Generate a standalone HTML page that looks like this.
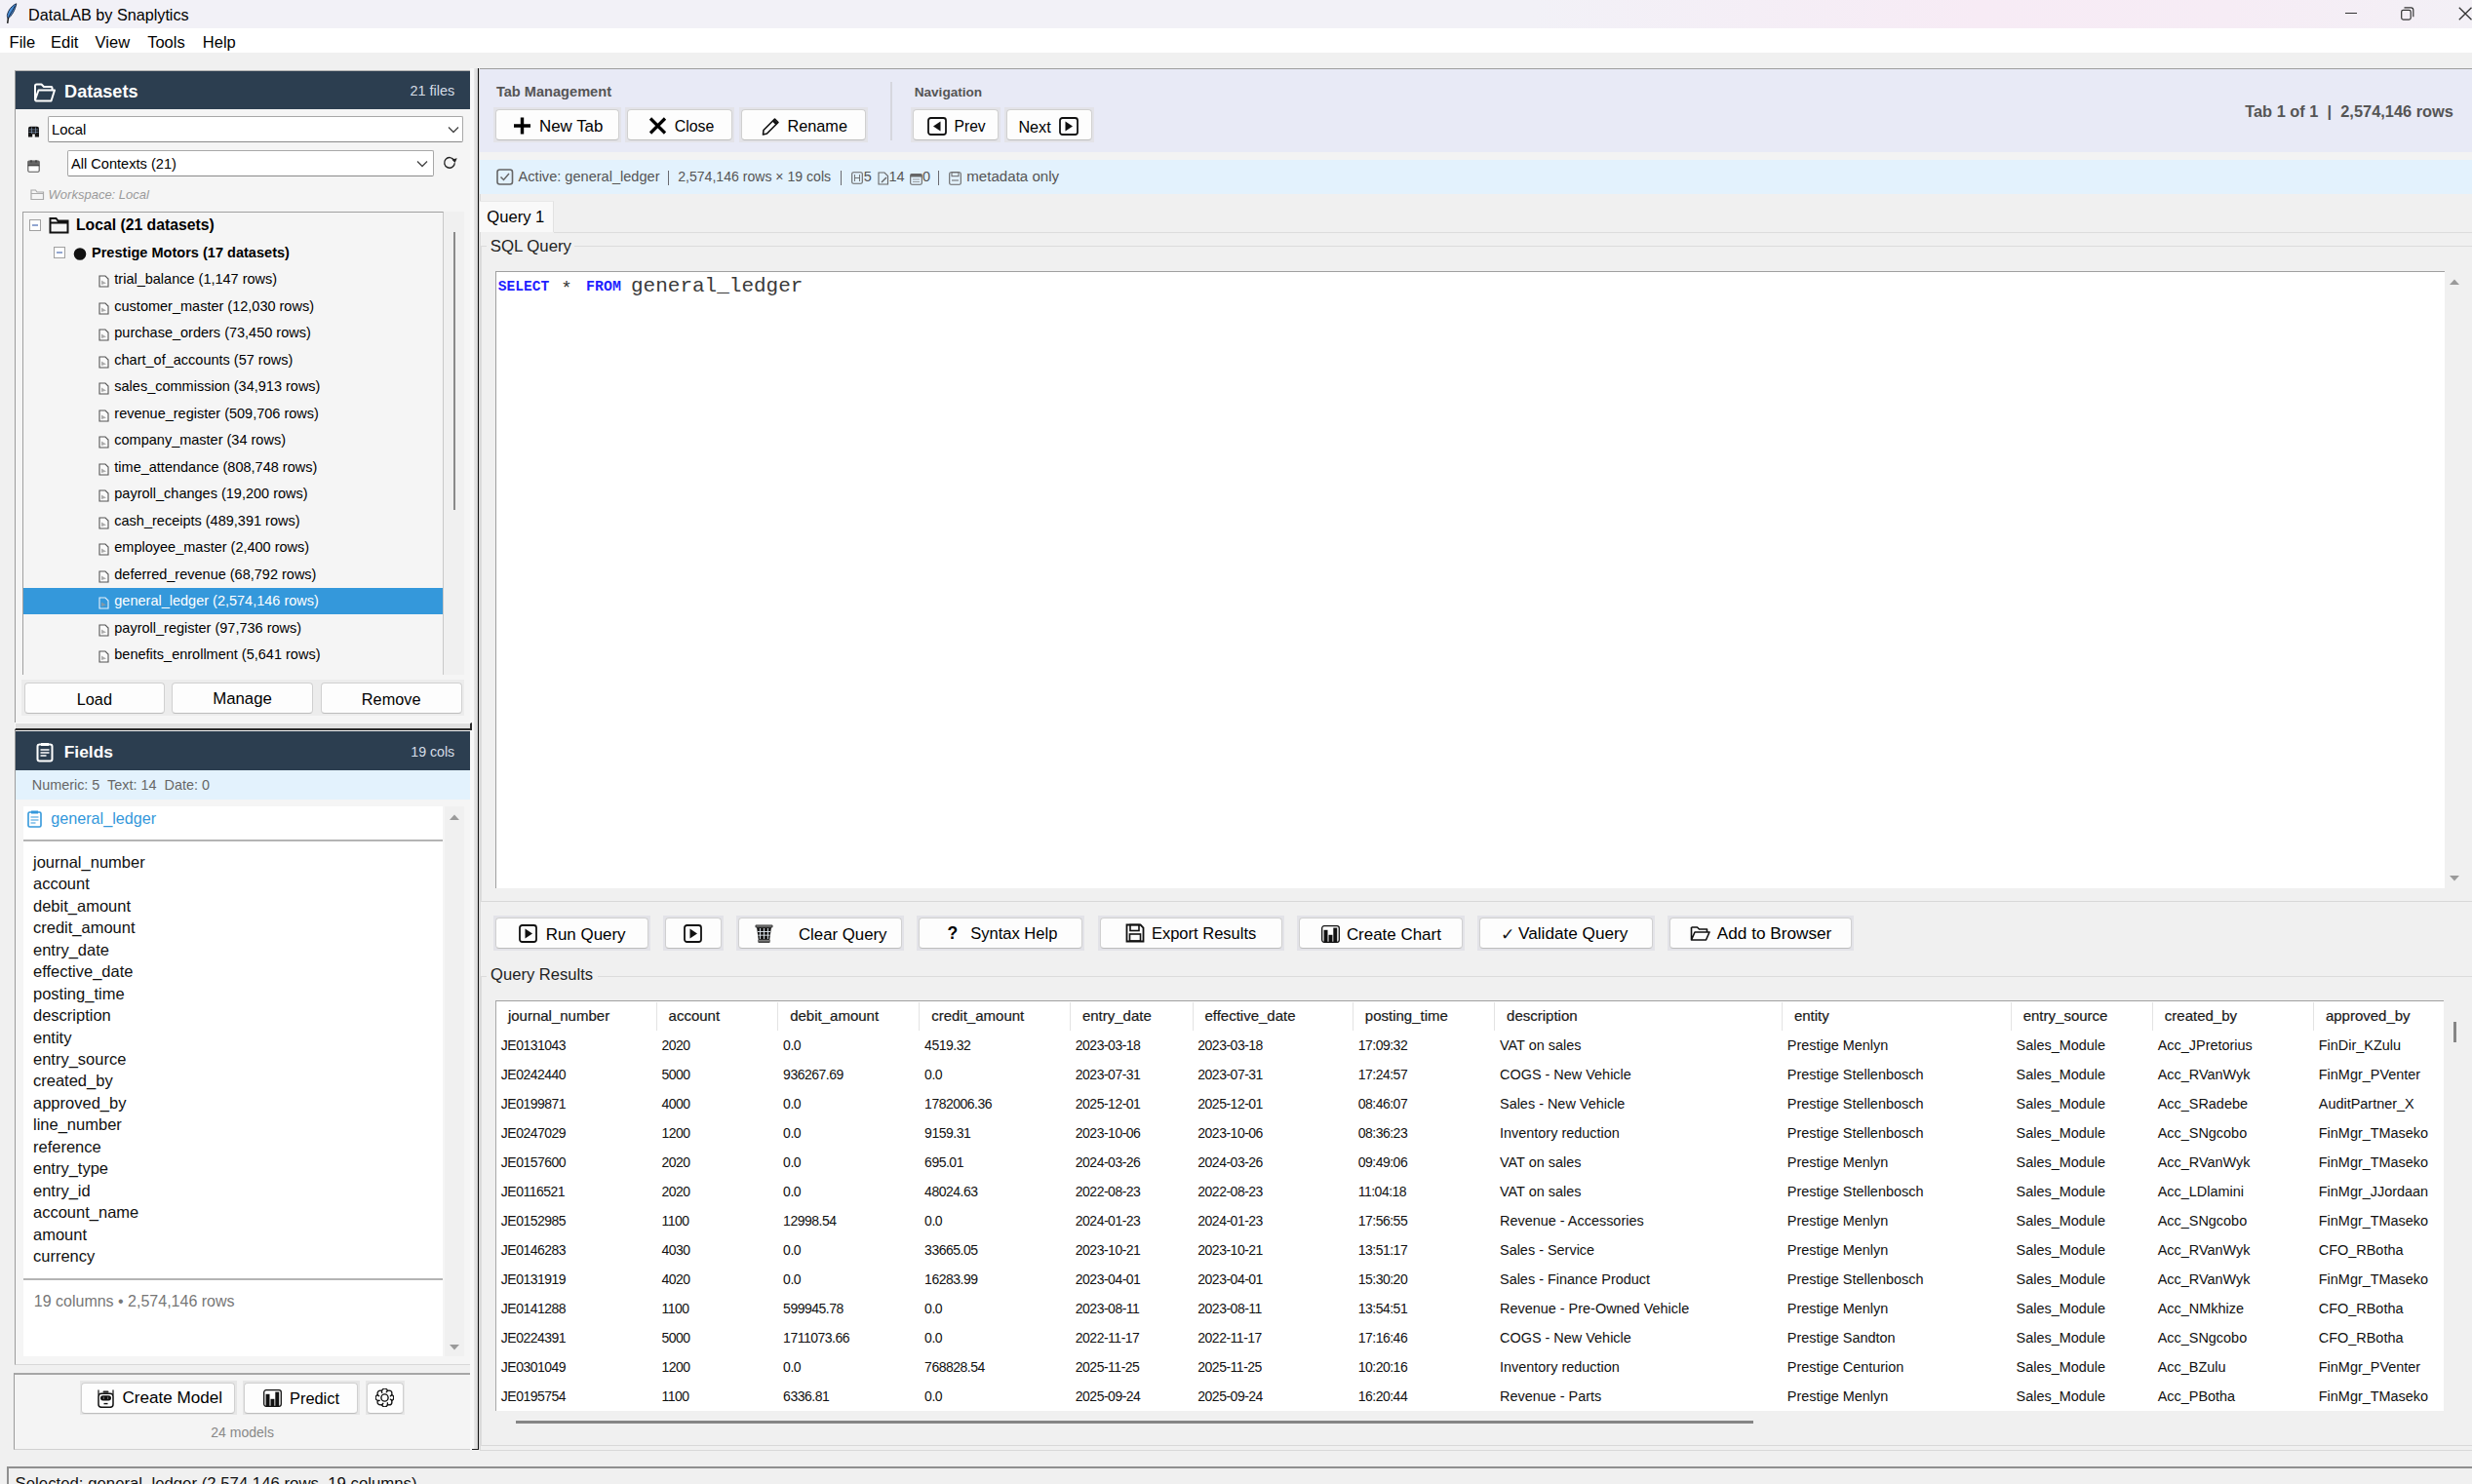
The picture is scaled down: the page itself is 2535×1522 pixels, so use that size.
<!DOCTYPE html>
<html><head><meta charset="utf-8"><title>DataLAB by Snaplytics</title>
<style>
html,body{margin:0;padding:0;}
body{width:2535px;height:1522px;overflow:hidden;position:relative;background:#f0f0f0;font-family:"Liberation Sans",sans-serif;}
body div, body svg{position:absolute;}
</style></head><body>
<div style="left:0px;top:0px;width:2535px;height:29px;background:linear-gradient(90deg,#f2f1f7 0%,#f2f1f7 62%,#f7ebf5 80%,#f6ecf5 90%,#f3f0f6 100%);"></div>
<div style="left:29px;top:5.17px;font-size:16.2px;line-height:20.25px;color:#000;font-weight:normal;font-family:'Liberation Sans', sans-serif;white-space:nowrap;">DataLAB by Snaplytics</div>
<svg style="left:6px;top:3px" width="12" height="21" viewBox="0 0 12 21"><path d="M10.8 0.8 C6.5 2.5 2.5 7 1.4 12.5 C1.2 14 1.6 15.3 2.4 16 C6 13 9.5 7.5 10.8 0.8 Z" fill="#4a90d9" stroke="#1b2a44" stroke-width="1"/><path d="M9.5 3 L2.8 14.5" stroke="#10203a" stroke-width="0.9"/><path d="M2.4 15.5 L1.8 20.3" stroke="#1b1b1b" stroke-width="1.5" stroke-linecap="round"/></svg>
<div style="left:2405px;top:13px;width:12px;height:1.2px;background:#333;"></div>
<svg style="left:2462px;top:7px" width="14" height="14" viewBox="0 0 14 14"><rect x="0.7" y="3.3" width="9.5" height="9.8" rx="1.8" fill="none" stroke="#333" stroke-width="1.2"/><path d="M3.5 0.9 h7 a2.3 2.3 0 0 1 2.3 2.3 v7" fill="none" stroke="#333" stroke-width="1.2"/></svg>
<svg style="left:2521px;top:7px" width="15" height="14" viewBox="0 0 15 14"><path d="M0.8 0.8 L13.5 13.2 M13.5 0.8 L0.8 13.2" stroke="#333" stroke-width="1.3"/></svg>
<div style="left:0px;top:29px;width:2535px;height:25px;background:#fff;"></div>
<div style="left:9.6px;top:32.99px;font-size:16.5px;line-height:20.62px;color:#000;font-weight:normal;font-family:'Liberation Sans', sans-serif;white-space:nowrap;">File</div>
<div style="left:52px;top:32.99px;font-size:16.5px;line-height:20.62px;color:#000;font-weight:normal;font-family:'Liberation Sans', sans-serif;white-space:nowrap;">Edit</div>
<div style="left:97.6px;top:32.99px;font-size:16.5px;line-height:20.62px;color:#000;font-weight:normal;font-family:'Liberation Sans', sans-serif;white-space:nowrap;">View</div>
<div style="left:151.2px;top:32.99px;font-size:16.5px;line-height:20.62px;color:#000;font-weight:normal;font-family:'Liberation Sans', sans-serif;white-space:nowrap;">Tools</div>
<div style="left:207.8px;top:32.99px;font-size:16.5px;line-height:20.62px;color:#000;font-weight:normal;font-family:'Liberation Sans', sans-serif;white-space:nowrap;">Help</div>
<div style="left:15px;top:71.5px;width:468px;height:670.5px;background:#f5f5f5;border:1px solid #9c9c9c;border-right:none;border-top-color:#b0b0b0;border-bottom-color:#d6d6d6;box-sizing:border-box;"></div>
<div style="left:16px;top:72.5px;width:466px;height:39.7px;background:#2c3e50;"></div>
<svg style="left:34px;top:85px" width="24" height="21" viewBox="0 0 24 21"><path d="M2 17.5 V3 a1.5 1.5 0 0 1 1.5 -1.5 h5 l2.5 2.5 h7.5 a1 1 0 0 1 1 1 v2.5" fill="none" stroke="#fff" stroke-width="2" stroke-linejoin="round"/><path d="M2 17.5 L5.5 7.5 H22 L18.5 18.5 H3 Z" fill="none" stroke="#fff" stroke-width="2" stroke-linejoin="round"/></svg>
<div style="left:66.1px;top:82.72px;font-size:18.1px;line-height:22.62px;color:#fff;font-weight:bold;font-family:'Liberation Sans', sans-serif;white-space:nowrap;">Datasets</div>
<div style="right:2068.8px;top:84.11px;font-size:14.4px;line-height:18.0px;color:#d5dde6;font-weight:normal;font-family:'Liberation Sans', sans-serif;white-space:nowrap;">21 files</div>
<svg style="left:27.5px;top:128.5px" width="13" height="12" viewBox="0 0 13 12"><path d="M1 11.5 V3 Q1 0.8 3 0.8 H10 Q12 0.8 12 3 V11.5 H7.8 V8.5 H5.2 V11.5 Z" fill="#151515"/><path d="M1.5 4 H11.5 M1.5 6.5 H11.5 M4.5 1.5 V8 M8.5 1.5 V8" stroke="#8aa0c0" stroke-width="0.7" opacity="0.9"/></svg>
<div style="left:49px;top:119px;width:426px;height:27px;background:#fff;border:1px solid #a8a8a8;border-bottom-color:#8a8a8a;border-radius:2px;box-sizing:border-box;"></div>
<div style="left:53px;top:124.22px;font-size:14.8px;line-height:18.5px;color:#000;font-weight:normal;font-family:'Liberation Sans', sans-serif;white-space:nowrap;">Local</div>
<svg style="left:459px;top:129px" width="12" height="8" viewBox="0 0 12 8"><path d="M1 1.5 L6 6.5 L11 1.5" fill="none" stroke="#444" stroke-width="1.3"/></svg>
<svg style="left:27.5px;top:163.5px" width="13" height="13" viewBox="0 0 13 13"><rect x="0.8" y="1" width="11.4" height="11.2" rx="1.2" fill="#fff" stroke="#555" stroke-width="1.1"/><rect x="0.8" y="1" width="11.4" height="4.6" fill="#666"/><path d="M0.8 5.8 H12.2" stroke="#222" stroke-width="1"/><path d="M4 0.3 V2.5 M9 0.3 V2.5" stroke="#333" stroke-width="1.2"/></svg>
<div style="left:69px;top:154px;width:376px;height:27px;background:#fff;border:1px solid #a8a8a8;border-bottom-color:#8a8a8a;border-radius:2px;box-sizing:border-box;"></div>
<div style="left:73px;top:158.72px;font-size:14.6px;line-height:18.25px;color:#000;font-weight:normal;font-family:'Liberation Sans', sans-serif;white-space:nowrap;">All Contexts (21)</div>
<svg style="left:427px;top:164px" width="12" height="8" viewBox="0 0 12 8"><path d="M1 1.5 L6 6.5 L11 1.5" fill="none" stroke="#444" stroke-width="1.3"/></svg>
<svg style="left:454px;top:160px" width="16" height="14" viewBox="0 0 16 14"><path d="M11.6 4.2 A5.3 5.3 0 1 0 12.3 7.2" fill="none" stroke="#222" stroke-width="1.4"/><path d="M9.3 3.6 L14.8 2.3 L12.6 7.0 Z" fill="#222"/></svg>
<svg style="left:31px;top:193px" width="15" height="13" viewBox="0 0 15 13"><path d="M1 2 h4.5 l1.5 2 h6.5 v7.5 H1 Z M1 5.5 h13" fill="none" stroke="#aaa" stroke-width="1.2"/></svg>
<div style="left:49.6px;top:191.67px;font-size:13.0px;line-height:16.25px;color:#9a9a9a;font-weight:normal;font-family:'Liberation Sans', sans-serif;white-space:nowrap;font-style:italic;">Workspace: Local</div>
<div style="left:23px;top:217px;width:432px;height:475px;background:#f5f5f5;border:1px solid #a0a0a0;border-right:1px solid #c8c8c8;border-bottom:none;box-sizing:border-box;"></div>
<div style="left:455px;top:217px;width:21px;height:475px;background:#f0f0f0;"></div>
<div style="left:465px;top:238px;width:2px;height:285px;background:#8a8a8a;"></div>
<svg style="left:30px;top:225.4px" width="12" height="12" viewBox="0 0 12 12"><rect x="0.5" y="0.5" width="11" height="11" fill="#fff" stroke="#a0a0a0"/><path d="M3 6 h6" stroke="#4a6cb3" stroke-width="1.2"/></svg>
<svg style="left:50px;top:222.4px" width="21" height="18" viewBox="0 0 21 18"><path d="M1.5 2 h6 l2 2.5 h10 v12 h-18 Z M1.5 6.5 h18" fill="none" stroke="#111" stroke-width="2"/></svg>
<div style="left:77.9px;top:221.1px;font-size:15.77px;line-height:19.71px;color:#000;font-weight:bold;font-family:'Liberation Sans', sans-serif;white-space:nowrap;">Local (21 datasets)</div>
<svg style="left:55px;top:252.9px" width="12" height="12" viewBox="0 0 12 12"><rect x="0.5" y="0.5" width="11" height="11" fill="#fff" stroke="#a0a0a0"/><path d="M3 6 h6" stroke="#4a6cb3" stroke-width="1.2"/></svg>
<svg style="left:75px;top:252.9px" width="14" height="14" viewBox="0 0 14 14"><circle cx="7" cy="7.5" r="6.3" fill="#111"/></svg>
<div style="left:94px;top:249.77px;font-size:14.55px;line-height:18.19px;color:#000;font-weight:bold;font-family:'Liberation Sans', sans-serif;white-space:nowrap;">Prestige Motors (17 datasets)</div>
<svg style="left:101px;top:282.4px" width="11" height="13" viewBox="0 0 11 13"><path d="M1 1 h6 l3 3 v8 h-9 Z" fill="#fafafa" stroke="#555" stroke-width="1.1"/><path d="M3 5.5 L8 8.5 L3 10 Z" fill="#999" opacity="0.8"/></svg>
<div style="left:117.3px;top:277.32px;font-size:14.5px;line-height:18.12px;color:#000;font-weight:normal;font-family:'Liberation Sans', sans-serif;white-space:nowrap;">trial_balance (1,147 rows)</div>
<svg style="left:101px;top:309.9px" width="11" height="13" viewBox="0 0 11 13"><path d="M1 1 h6 l3 3 v8 h-9 Z" fill="#fafafa" stroke="#555" stroke-width="1.1"/><path d="M3 5.5 L8 8.5 L3 10 Z" fill="#999" opacity="0.8"/></svg>
<div style="left:117.3px;top:304.81px;font-size:14.5px;line-height:18.12px;color:#000;font-weight:normal;font-family:'Liberation Sans', sans-serif;white-space:nowrap;">customer_master (12,030 rows)</div>
<svg style="left:101px;top:337.4px" width="11" height="13" viewBox="0 0 11 13"><path d="M1 1 h6 l3 3 v8 h-9 Z" fill="#fafafa" stroke="#555" stroke-width="1.1"/><path d="M3 5.5 L8 8.5 L3 10 Z" fill="#999" opacity="0.8"/></svg>
<div style="left:117.3px;top:332.3px;font-size:14.5px;line-height:18.12px;color:#000;font-weight:normal;font-family:'Liberation Sans', sans-serif;white-space:nowrap;">purchase_orders (73,450 rows)</div>
<svg style="left:101px;top:364.9px" width="11" height="13" viewBox="0 0 11 13"><path d="M1 1 h6 l3 3 v8 h-9 Z" fill="#fafafa" stroke="#555" stroke-width="1.1"/><path d="M3 5.5 L8 8.5 L3 10 Z" fill="#999" opacity="0.8"/></svg>
<div style="left:117.3px;top:359.79px;font-size:14.5px;line-height:18.12px;color:#000;font-weight:normal;font-family:'Liberation Sans', sans-serif;white-space:nowrap;">chart_of_accounts (57 rows)</div>
<svg style="left:101px;top:392.4px" width="11" height="13" viewBox="0 0 11 13"><path d="M1 1 h6 l3 3 v8 h-9 Z" fill="#fafafa" stroke="#555" stroke-width="1.1"/><path d="M3 5.5 L8 8.5 L3 10 Z" fill="#999" opacity="0.8"/></svg>
<div style="left:117.3px;top:387.28px;font-size:14.5px;line-height:18.12px;color:#000;font-weight:normal;font-family:'Liberation Sans', sans-serif;white-space:nowrap;">sales_commission (34,913 rows)</div>
<svg style="left:101px;top:419.8px" width="11" height="13" viewBox="0 0 11 13"><path d="M1 1 h6 l3 3 v8 h-9 Z" fill="#fafafa" stroke="#555" stroke-width="1.1"/><path d="M3 5.5 L8 8.5 L3 10 Z" fill="#999" opacity="0.8"/></svg>
<div style="left:117.3px;top:414.77px;font-size:14.5px;line-height:18.12px;color:#000;font-weight:normal;font-family:'Liberation Sans', sans-serif;white-space:nowrap;">revenue_register (509,706 rows)</div>
<svg style="left:101px;top:447.3px" width="11" height="13" viewBox="0 0 11 13"><path d="M1 1 h6 l3 3 v8 h-9 Z" fill="#fafafa" stroke="#555" stroke-width="1.1"/><path d="M3 5.5 L8 8.5 L3 10 Z" fill="#999" opacity="0.8"/></svg>
<div style="left:117.3px;top:442.26px;font-size:14.5px;line-height:18.12px;color:#000;font-weight:normal;font-family:'Liberation Sans', sans-serif;white-space:nowrap;">company_master (34 rows)</div>
<svg style="left:101px;top:474.8px" width="11" height="13" viewBox="0 0 11 13"><path d="M1 1 h6 l3 3 v8 h-9 Z" fill="#fafafa" stroke="#555" stroke-width="1.1"/><path d="M3 5.5 L8 8.5 L3 10 Z" fill="#999" opacity="0.8"/></svg>
<div style="left:117.3px;top:469.75px;font-size:14.5px;line-height:18.12px;color:#000;font-weight:normal;font-family:'Liberation Sans', sans-serif;white-space:nowrap;">time_attendance (808,748 rows)</div>
<svg style="left:101px;top:502.3px" width="11" height="13" viewBox="0 0 11 13"><path d="M1 1 h6 l3 3 v8 h-9 Z" fill="#fafafa" stroke="#555" stroke-width="1.1"/><path d="M3 5.5 L8 8.5 L3 10 Z" fill="#999" opacity="0.8"/></svg>
<div style="left:117.3px;top:497.24px;font-size:14.5px;line-height:18.12px;color:#000;font-weight:normal;font-family:'Liberation Sans', sans-serif;white-space:nowrap;">payroll_changes (19,200 rows)</div>
<svg style="left:101px;top:529.8px" width="11" height="13" viewBox="0 0 11 13"><path d="M1 1 h6 l3 3 v8 h-9 Z" fill="#fafafa" stroke="#555" stroke-width="1.1"/><path d="M3 5.5 L8 8.5 L3 10 Z" fill="#999" opacity="0.8"/></svg>
<div style="left:117.3px;top:524.73px;font-size:14.5px;line-height:18.12px;color:#000;font-weight:normal;font-family:'Liberation Sans', sans-serif;white-space:nowrap;">cash_receipts (489,391 rows)</div>
<svg style="left:101px;top:557.3px" width="11" height="13" viewBox="0 0 11 13"><path d="M1 1 h6 l3 3 v8 h-9 Z" fill="#fafafa" stroke="#555" stroke-width="1.1"/><path d="M3 5.5 L8 8.5 L3 10 Z" fill="#999" opacity="0.8"/></svg>
<div style="left:117.3px;top:552.22px;font-size:14.5px;line-height:18.12px;color:#000;font-weight:normal;font-family:'Liberation Sans', sans-serif;white-space:nowrap;">employee_master (2,400 rows)</div>
<svg style="left:101px;top:584.8px" width="11" height="13" viewBox="0 0 11 13"><path d="M1 1 h6 l3 3 v8 h-9 Z" fill="#fafafa" stroke="#555" stroke-width="1.1"/><path d="M3 5.5 L8 8.5 L3 10 Z" fill="#999" opacity="0.8"/></svg>
<div style="left:117.3px;top:579.71px;font-size:14.5px;line-height:18.12px;color:#000;font-weight:normal;font-family:'Liberation Sans', sans-serif;white-space:nowrap;">deferred_revenue (68,792 rows)</div>
<div style="left:24px;top:603px;width:430px;height:27px;background:#3498db;"></div>
<svg style="left:101px;top:612.3px" width="11" height="13" viewBox="0 0 11 13"><path d="M1 1 h6 l3 3 v8 h-9 Z" fill="none" stroke="#e8f1fa" stroke-width="1.1"/><path d="M3 5.5 L8 8.5 L3 10 Z" fill="#999" opacity="0.8"/></svg>
<div style="left:117.3px;top:607.2px;font-size:14.5px;line-height:18.12px;color:#fff;font-weight:normal;font-family:'Liberation Sans', sans-serif;white-space:nowrap;">general_ledger (2,574,146 rows)</div>
<svg style="left:101px;top:639.8px" width="11" height="13" viewBox="0 0 11 13"><path d="M1 1 h6 l3 3 v8 h-9 Z" fill="#fafafa" stroke="#555" stroke-width="1.1"/><path d="M3 5.5 L8 8.5 L3 10 Z" fill="#999" opacity="0.8"/></svg>
<div style="left:117.3px;top:634.69px;font-size:14.5px;line-height:18.12px;color:#000;font-weight:normal;font-family:'Liberation Sans', sans-serif;white-space:nowrap;">payroll_register (97,736 rows)</div>
<svg style="left:101px;top:667.3px" width="11" height="13" viewBox="0 0 11 13"><path d="M1 1 h6 l3 3 v8 h-9 Z" fill="#fafafa" stroke="#555" stroke-width="1.1"/><path d="M3 5.5 L8 8.5 L3 10 Z" fill="#999" opacity="0.8"/></svg>
<div style="left:117.3px;top:662.18px;font-size:14.5px;line-height:18.12px;color:#000;font-weight:normal;font-family:'Liberation Sans', sans-serif;white-space:nowrap;">benefits_enrollment (5,641 rows)</div>
<div style="left:22px;top:697px;width:454px;height:37px;background:#ececec;"></div>
<div style="left:24.7px;top:700px;width:144.3px;height:32px;background:#fdfdfd;border:1px solid #d0d0d0;border-bottom-color:#bdbdbd;border-radius:4px;box-sizing:border-box;"></div>
<div style="left:-203.15px;width:600px;text-align:center;top:706.86px;font-size:16.3px;line-height:20.38px;color:#000;font-weight:normal;font-family:'Liberation Sans', sans-serif;white-space:nowrap;">Load</div>
<div style="left:176px;top:700px;width:145px;height:32px;background:#fdfdfd;border:1px solid #d0d0d0;border-bottom-color:#bdbdbd;border-radius:4px;box-sizing:border-box;"></div>
<div style="left:-51.5px;width:600px;text-align:center;top:706.38px;font-size:16.8px;line-height:21.0px;color:#000;font-weight:normal;font-family:'Liberation Sans', sans-serif;white-space:nowrap;">Manage</div>
<div style="left:328.7px;top:700px;width:145.0px;height:32px;background:#fdfdfd;border:1px solid #d0d0d0;border-bottom-color:#bdbdbd;border-radius:4px;box-sizing:border-box;"></div>
<div style="left:101.19999999999999px;width:600px;text-align:center;top:706.86px;font-size:16.3px;line-height:20.38px;color:#000;font-weight:normal;font-family:'Liberation Sans', sans-serif;white-space:nowrap;">Remove</div>
<div style="left:15px;top:749px;width:468px;height:651px;background:#f5f5f5;border:1px solid #9c9c9c;border-right:none;border-top:none;border-bottom-color:#d8d8d8;box-sizing:border-box;"></div>
<div style="left:16px;top:750px;width:466px;height:40px;background:#2c3e50;"></div>
<svg style="left:37px;top:761px" width="18" height="21" viewBox="0 0 18 21"><rect x="1.5" y="2.5" width="15" height="17" rx="2" fill="none" stroke="#fff" stroke-width="2"/><rect x="5" y="1" width="8" height="3" fill="#fff"/><path d="M4.5 8 h9 M4.5 11 h9 M4.5 14 h6" stroke="#fff" stroke-width="1.5"/></svg>
<div style="left:65.7px;top:760.5px;font-size:17.4px;line-height:21.75px;color:#fff;font-weight:bold;font-family:'Liberation Sans', sans-serif;white-space:nowrap;">Fields</div>
<div style="right:2068.8px;top:763.4px;font-size:14.2px;line-height:17.75px;color:#d5dde6;font-weight:normal;font-family:'Liberation Sans', sans-serif;white-space:nowrap;">19 cols</div>
<div style="left:16px;top:790px;width:466px;height:30px;background:#e3f2fd;"></div>
<div style="left:32.8px;top:795.81px;font-size:14.4px;line-height:18.0px;color:#666;font-weight:normal;font-family:'Liberation Sans', sans-serif;white-space:nowrap;white-space:pre;">Numeric: 5  Text: 14  Date: 0</div>
<div style="left:24px;top:827px;width:430px;height:564px;background:#fff;"></div>
<div style="left:456px;top:827px;width:20px;height:564px;background:#f0f0f0;"></div>
<svg style="left:460px;top:834px" width="12" height="8" viewBox="0 0 12 8"><path d="M1 7 L6 1.5 L11 7 Z" fill="#9a9a9a"/></svg>
<svg style="left:460px;top:1378px" width="12" height="8" viewBox="0 0 12 8"><path d="M1 1 L6 6.5 L11 1 Z" fill="#9a9a9a"/></svg>
<svg style="left:28px;top:831px" width="15" height="18" viewBox="0 0 15 18"><rect x="1" y="2" width="13" height="15" rx="1.5" fill="none" stroke="#3498db" stroke-width="1.6"/><rect x="4" y="0.5" width="7" height="3" fill="#3498db"/><path d="M3.5 7 h8 M3.5 10 h8 M3.5 13 h5" stroke="#3498db" stroke-width="1.2"/></svg>
<div style="left:52.2px;top:829.46px;font-size:16.2px;line-height:20.25px;color:#3498db;font-weight:normal;font-family:'Liberation Sans', sans-serif;white-space:nowrap;">general_ledger</div>
<div style="left:24px;top:861px;width:430px;height:2px;background:#b4b4b4;"></div>
<div style="left:34px;top:873.77px;font-size:16.5px;line-height:20.62px;color:#111;font-weight:normal;font-family:'Liberation Sans', sans-serif;white-space:nowrap;">journal_number</div>
<div style="left:34px;top:896.24px;font-size:16.5px;line-height:20.62px;color:#111;font-weight:normal;font-family:'Liberation Sans', sans-serif;white-space:nowrap;">account</div>
<div style="left:34px;top:918.71px;font-size:16.5px;line-height:20.62px;color:#111;font-weight:normal;font-family:'Liberation Sans', sans-serif;white-space:nowrap;">debit_amount</div>
<div style="left:34px;top:941.18px;font-size:16.5px;line-height:20.62px;color:#111;font-weight:normal;font-family:'Liberation Sans', sans-serif;white-space:nowrap;">credit_amount</div>
<div style="left:34px;top:963.65px;font-size:16.5px;line-height:20.62px;color:#111;font-weight:normal;font-family:'Liberation Sans', sans-serif;white-space:nowrap;">entry_date</div>
<div style="left:34px;top:986.12px;font-size:16.5px;line-height:20.62px;color:#111;font-weight:normal;font-family:'Liberation Sans', sans-serif;white-space:nowrap;">effective_date</div>
<div style="left:34px;top:1008.59px;font-size:16.5px;line-height:20.62px;color:#111;font-weight:normal;font-family:'Liberation Sans', sans-serif;white-space:nowrap;">posting_time</div>
<div style="left:34px;top:1031.06px;font-size:16.5px;line-height:20.62px;color:#111;font-weight:normal;font-family:'Liberation Sans', sans-serif;white-space:nowrap;">description</div>
<div style="left:34px;top:1053.53px;font-size:16.5px;line-height:20.62px;color:#111;font-weight:normal;font-family:'Liberation Sans', sans-serif;white-space:nowrap;">entity</div>
<div style="left:34px;top:1076.0px;font-size:16.5px;line-height:20.62px;color:#111;font-weight:normal;font-family:'Liberation Sans', sans-serif;white-space:nowrap;">entry_source</div>
<div style="left:34px;top:1098.47px;font-size:16.5px;line-height:20.62px;color:#111;font-weight:normal;font-family:'Liberation Sans', sans-serif;white-space:nowrap;">created_by</div>
<div style="left:34px;top:1120.94px;font-size:16.5px;line-height:20.62px;color:#111;font-weight:normal;font-family:'Liberation Sans', sans-serif;white-space:nowrap;">approved_by</div>
<div style="left:34px;top:1143.41px;font-size:16.5px;line-height:20.62px;color:#111;font-weight:normal;font-family:'Liberation Sans', sans-serif;white-space:nowrap;">line_number</div>
<div style="left:34px;top:1165.88px;font-size:16.5px;line-height:20.62px;color:#111;font-weight:normal;font-family:'Liberation Sans', sans-serif;white-space:nowrap;">reference</div>
<div style="left:34px;top:1188.35px;font-size:16.5px;line-height:20.62px;color:#111;font-weight:normal;font-family:'Liberation Sans', sans-serif;white-space:nowrap;">entry_type</div>
<div style="left:34px;top:1210.82px;font-size:16.5px;line-height:20.62px;color:#111;font-weight:normal;font-family:'Liberation Sans', sans-serif;white-space:nowrap;">entry_id</div>
<div style="left:34px;top:1233.29px;font-size:16.5px;line-height:20.62px;color:#111;font-weight:normal;font-family:'Liberation Sans', sans-serif;white-space:nowrap;">account_name</div>
<div style="left:34px;top:1255.76px;font-size:16.5px;line-height:20.62px;color:#111;font-weight:normal;font-family:'Liberation Sans', sans-serif;white-space:nowrap;">amount</div>
<div style="left:34px;top:1278.23px;font-size:16.5px;line-height:20.62px;color:#111;font-weight:normal;font-family:'Liberation Sans', sans-serif;white-space:nowrap;">currency</div>
<div style="left:24px;top:1311px;width:430px;height:2px;background:#b4b4b4;"></div>
<div style="left:34.8px;top:1324.96px;font-size:16.0px;line-height:20.0px;color:#777;font-weight:normal;font-family:'Liberation Sans', sans-serif;white-space:nowrap;">19 columns • 2,574,146 rows</div>
<div style="left:14px;top:1408px;width:470px;height:79px;background:#f4f4f4;border:1px solid #d0d0d0;border-left:1.5px solid #9a9a9a;border-top:2px solid #a6a6a6;box-sizing:border-box;"></div>
<div style="left:81.5px;top:1416px;width:161px;height:35px;background:#e6e6e6;"></div>
<div style="left:83px;top:1417.7px;width:158px;height:32px;background:#fdfdfd;border:1px solid #d0d0d0;border-bottom-color:#bdbdbd;border-radius:4px;box-sizing:border-box;"></div>
<div style="left:248.5px;top:1416px;width:120px;height:35px;background:#e6e6e6;"></div>
<div style="left:250px;top:1417.7px;width:117px;height:32px;background:#fdfdfd;border:1px solid #d0d0d0;border-bottom-color:#bdbdbd;border-radius:4px;box-sizing:border-box;"></div>
<div style="left:374.5px;top:1416px;width:40.60000000000002px;height:35px;background:#e6e6e6;"></div>
<div style="left:376px;top:1417.7px;width:37.60000000000002px;height:32px;background:#fdfdfd;border:1px solid #d0d0d0;border-bottom-color:#bdbdbd;border-radius:4px;box-sizing:border-box;"></div>
<svg style="left:99.5px;top:1424.5px" width="17" height="19" viewBox="0 0 17 19"><path d="M1 0.5 V5.5 M16 0.5 V5.5" stroke="#111" stroke-width="1.2"/><rect x="5.5" y="1.5" width="6" height="2" rx="1" fill="#222"/><rect x="1" y="4.3" width="15" height="14" rx="3" fill="none" stroke="#111" stroke-width="1.5"/><rect x="3" y="6.2" width="11" height="5.2" rx="2.6" fill="#111"/><path d="M6.3 7.5 V10 M10.7 7.5 V10" stroke="#777" stroke-width="1"/><path d="M6.5 14.6 H10.5" stroke="#111" stroke-width="1.4"/></svg>
<div style="left:125.4px;top:1423.38px;font-size:17.1px;line-height:21.38px;color:#000;font-weight:normal;font-family:'Liberation Sans', sans-serif;white-space:nowrap;">Create Model</div>
<svg style="left:270px;top:1425px" width="19" height="18" viewBox="0 0 19 18"><rect x="0.7" y="0.7" width="17.6" height="16.6" rx="2.2" fill="none" stroke="#111" stroke-width="1.3"/><rect x="2.6" y="4.8" width="3.9" height="12.4" fill="#111"/><rect x="7.5" y="9.8" width="3.9" height="7.4" fill="#111"/><rect x="12.3" y="2.6" width="3.9" height="14.6" fill="#111"/></svg>
<div style="left:297px;top:1424.07px;font-size:16.4px;line-height:20.5px;color:#000;font-weight:normal;font-family:'Liberation Sans', sans-serif;white-space:nowrap;">Predict</div>
<svg style="left:385px;top:1424px" width="19" height="19" viewBox="0 0 19 19"><circle cx="15.80" cy="9.50" r="3" fill="#fff" stroke="#111" stroke-width="1.3"/><circle cx="13.95" cy="13.95" r="3" fill="#fff" stroke="#111" stroke-width="1.3"/><circle cx="9.50" cy="15.80" r="3" fill="#fff" stroke="#111" stroke-width="1.3"/><circle cx="5.05" cy="13.95" r="3" fill="#fff" stroke="#111" stroke-width="1.3"/><circle cx="3.20" cy="9.50" r="3" fill="#fff" stroke="#111" stroke-width="1.3"/><circle cx="5.05" cy="5.05" r="3" fill="#fff" stroke="#111" stroke-width="1.3"/><circle cx="9.50" cy="3.20" r="3" fill="#fff" stroke="#111" stroke-width="1.3"/><circle cx="13.95" cy="5.05" r="3" fill="#fff" stroke="#111" stroke-width="1.3"/><circle cx="9.5" cy="9.5" r="5.6" fill="#fff"/><circle cx="9.5" cy="9.5" r="3.6" fill="none" stroke="#111" stroke-width="1.4"/></svg>
<div style="left:-51.400000000000006px;width:600px;text-align:center;top:1461.4px;font-size:14.0px;line-height:17.5px;color:#888;font-weight:normal;font-family:'Liberation Sans', sans-serif;white-space:nowrap;">24 models</div>
<div style="left:482px;top:70px;width:4px;height:1417px;background:#f8f8f8;"></div>
<div style="left:486px;top:70px;width:4px;height:1417px;background:linear-gradient(90deg,#ebebeb,#d6d6d6);"></div>
<div style="left:490px;top:70px;width:1.4px;height:1417px;background:#111;"></div>
<div style="left:491.4px;top:70px;width:1.6px;height:1417px;background:#d9d9d9;"></div>
<div style="left:484px;top:1485.5px;width:7.4px;height:1.6px;background:#222;"></div>
<div style="left:15px;top:741px;width:469px;height:8px;background:#e0e0e0;border-top:1px solid #fafafa;border-left:1px solid #fafafa;border-bottom:2px solid #2a2a2a;border-right:2px solid #2a2a2a;box-sizing:border-box;"></div>
<div style="left:7px;top:1504px;width:2528px;height:18px;background:#f0f0f0;border-top:2px solid #8f8f8f;border-left:2px solid #8f8f8f;box-sizing:border-box;"></div>
<div style="left:15.6px;top:1511.71px;font-size:16.77px;line-height:20.96px;color:#111;font-weight:normal;font-family:'Liberation Sans', sans-serif;white-space:nowrap;">Selected: general_ledger (2,574,146 rows, 19 columns)</div>
<div style="left:492px;top:70px;width:2043px;height:86px;background:#e8eaf6;border-top:1px solid #9e9e9e;box-sizing:border-box;"></div>
<div style="left:508.9px;top:84.82px;font-size:14.6px;line-height:18.25px;color:#555;font-weight:bold;font-family:'Liberation Sans', sans-serif;white-space:nowrap;">Tab Management</div>
<div style="left:937.7px;top:85.79px;font-size:13.6px;line-height:17.0px;color:#555;font-weight:bold;font-family:'Liberation Sans', sans-serif;white-space:nowrap;">Navigation</div>
<div style="left:912.6px;top:84.2px;width:2px;height:59.5px;background:#d6d7de;"></div>
<div style="left:505.5px;top:110.4px;width:131.7px;height:35.900000000000006px;background:#e3e3e8;"></div>
<div style="left:507.5px;top:112.4px;width:127.7px;height:31.900000000000006px;background:#fdfdfd;border:1px solid #d0d0d0;border-bottom-color:#bdbdbd;border-radius:4px;box-sizing:border-box;"></div>
<div style="left:641.4px;top:110.4px;width:111.9px;height:35.900000000000006px;background:#e3e3e8;"></div>
<div style="left:643.4px;top:112.4px;width:107.9px;height:31.900000000000006px;background:#fdfdfd;border:1px solid #d0d0d0;border-bottom-color:#bdbdbd;border-radius:4px;box-sizing:border-box;"></div>
<div style="left:757.8px;top:110.4px;width:132.0px;height:35.900000000000006px;background:#e3e3e8;"></div>
<div style="left:759.8px;top:112.4px;width:128.0px;height:31.900000000000006px;background:#fdfdfd;border:1px solid #d0d0d0;border-bottom-color:#bdbdbd;border-radius:4px;box-sizing:border-box;"></div>
<div style="left:934px;top:110.4px;width:91.8px;height:35.900000000000006px;background:#e3e3e8;"></div>
<div style="left:936px;top:112.4px;width:87.8px;height:31.900000000000006px;background:#fdfdfd;border:1px solid #d0d0d0;border-bottom-color:#bdbdbd;border-radius:4px;box-sizing:border-box;"></div>
<div style="left:1029.7px;top:110.4px;width:92.3px;height:35.900000000000006px;background:#e3e3e8;"></div>
<div style="left:1031.7px;top:112.4px;width:88.3px;height:31.900000000000006px;background:#fdfdfd;border:1px solid #d0d0d0;border-bottom-color:#bdbdbd;border-radius:4px;box-sizing:border-box;"></div>
<svg style="left:526px;top:120px" width="19" height="18" viewBox="0 0 19 18"><path d="M9.5 0.5 V17.5 M1 9 H18" stroke="#000" stroke-width="3.4"/></svg>
<div style="left:553px;top:118.88px;font-size:16.9px;line-height:21.12px;color:#000;font-weight:normal;font-family:'Liberation Sans', sans-serif;white-space:nowrap;">New Tab</div>
<svg style="left:665px;top:120px" width="19" height="18" viewBox="0 0 19 18"><path d="M2 1.5 L17 16.5 M17 1.5 L2 16.5" stroke="#000" stroke-width="3.2"/></svg>
<div style="left:691.7px;top:119.85px;font-size:15.9px;line-height:19.88px;color:#000;font-weight:normal;font-family:'Liberation Sans', sans-serif;white-space:nowrap;">Close</div>
<svg style="left:780px;top:119px" width="21" height="21" viewBox="0 0 21 21"><path d="M3 14.5 L14.5 3 L18 6.5 L6.5 18 L2.5 19 Z" fill="none" stroke="#111" stroke-width="1.6" stroke-linejoin="round"/><path d="M13 4.5 L16.5 8" stroke="#111" stroke-width="3"/></svg>
<div style="left:807.4px;top:119.46px;font-size:16.3px;line-height:20.38px;color:#000;font-weight:normal;font-family:'Liberation Sans', sans-serif;white-space:nowrap;">Rename</div>
<svg style="left:950.5px;top:119.5px" width="20" height="19" viewBox="0 0 20 19"><rect x="1" y="1" width="18" height="17" rx="2.5" fill="none" stroke="#111" stroke-width="1.8"/><path d="M13.5 4.5 V14.5 L6 9.5 Z" fill="#111"/></svg>
<div style="left:978.6px;top:120.14px;font-size:15.6px;line-height:19.5px;color:#000;font-weight:normal;font-family:'Liberation Sans', sans-serif;white-space:nowrap;">Prev</div>
<div style="left:1044.4px;top:119.56px;font-size:16.2px;line-height:20.25px;color:#000;font-weight:normal;font-family:'Liberation Sans', sans-serif;white-space:nowrap;">Next</div>
<svg style="left:1086px;top:119.5px" width="20" height="19" viewBox="0 0 20 19"><rect x="1" y="1" width="18" height="17" rx="2.5" fill="none" stroke="#111" stroke-width="1.8"/><path d="M6.5 4.5 V14.5 L14 9.5 Z" fill="#111"/></svg>
<div style="right:19px;top:104.37px;font-size:16.4px;line-height:20.5px;color:#555;font-weight:bold;font-family:'Liberation Sans', sans-serif;white-space:nowrap;white-space:pre;">Tab 1 of 1  |  2,574,146 rows</div>
<div style="left:492px;top:156px;width:2043px;height:7.5px;background:#f3f3f3;"></div>
<div style="left:492px;top:163.5px;width:2043px;height:35px;background:#e3f2fd;"></div>
<svg style="left:509px;top:172.5px" width="18" height="17" viewBox="0 0 18 17"><rect x="1" y="1" width="15.5" height="15" rx="2.5" fill="none" stroke="#666" stroke-width="1.6"/><path d="M4.5 8.5 L7.5 11.5 L13 5" fill="none" stroke="#666" stroke-width="1.5"/></svg>
<div style="left:531.6px;top:172.05px;font-size:14.57px;line-height:18.21px;color:#555;font-weight:normal;font-family:'Liberation Sans', sans-serif;white-space:nowrap;">Active: general_ledger</div>
<div style="left:685px;top:175.2px;width:1.3px;height:14.6px;background:#6a6a70;"></div>
<div style="left:695.2px;top:172.51px;font-size:14.09px;line-height:17.61px;color:#555;font-weight:normal;font-family:'Liberation Sans', sans-serif;white-space:nowrap;">2,574,146 rows × 19 cols</div>
<div style="left:861.5px;top:175.2px;width:1.3px;height:14.6px;background:#6a6a70;"></div>
<svg style="left:873px;top:176px" width="12" height="13" viewBox="0 0 12 13"><rect x="0.7" y="0.7" width="10.6" height="11.6" rx="1.5" fill="none" stroke="#666" stroke-width="1.1"/><path d="M3.5 3 v7 M8.5 3 v7 M3.5 6.5 h5" stroke="#666" stroke-width="0.9"/></svg>
<div style="left:885.8px;top:172.12px;font-size:14.5px;line-height:18.12px;color:#555;font-weight:normal;font-family:'Liberation Sans', sans-serif;white-space:nowrap;">5</div>
<svg style="left:900px;top:176px" width="12" height="14" viewBox="0 0 12 14"><path d="M1 1 h6 l3.5 3.5 v8.5 h-9.5 Z" fill="none" stroke="#666" stroke-width="1.1"/><path d="M4 11 L9 6" stroke="#666" stroke-width="1.4"/></svg>
<div style="left:911.5px;top:172.12px;font-size:14.5px;line-height:18.12px;color:#555;font-weight:normal;font-family:'Liberation Sans', sans-serif;white-space:nowrap;">14</div>
<svg style="left:933px;top:177px" width="13" height="13" viewBox="0 0 13 13"><rect x="0.7" y="1.5" width="11.6" height="10.8" rx="1.5" fill="none" stroke="#666" stroke-width="1.1"/><rect x="0.7" y="1.5" width="11.6" height="3" fill="#666"/><path d="M3 7 h7 M3 9.5 h7" stroke="#888" stroke-width="0.8"/></svg>
<div style="left:946px;top:172.12px;font-size:14.5px;line-height:18.12px;color:#555;font-weight:normal;font-family:'Liberation Sans', sans-serif;white-space:nowrap;">0</div>
<div style="left:962px;top:175.2px;width:1.3px;height:14.6px;background:#6a6a70;"></div>
<svg style="left:973px;top:176px" width="13" height="14" viewBox="0 0 13 14"><rect x="0.7" y="0.7" width="11.6" height="12.6" rx="1.5" fill="none" stroke="#666" stroke-width="1.1"/><rect x="3" y="0.7" width="7" height="4" fill="none" stroke="#666" stroke-width="1"/><path d="M3 9 h7" stroke="#666" stroke-width="1"/></svg>
<div style="left:991.3px;top:171.53px;font-size:15.1px;line-height:18.88px;color:#555;font-weight:normal;font-family:'Liberation Sans', sans-serif;white-space:nowrap;">metadata only</div>
<div style="left:492px;top:206.2px;width:75.5px;height:32.3px;background:#f9f9f9;border-top:1px solid #e8e8e8;border-right:1px solid #e2e2e2;box-sizing:border-box;"></div>
<div style="left:499.3px;top:212.97px;font-size:16.6px;line-height:20.75px;color:#000;font-weight:normal;font-family:'Liberation Sans', sans-serif;white-space:nowrap;">Query 1</div>
<div style="left:567.5px;top:238px;width:1967.5px;height:1.2px;background:#dcdcdc;"></div>
<div style="left:493px;top:252px;width:2042px;height:673px;border-top:1px solid #dcdcdc;border-left:1px solid #dcdcdc;border-bottom:1px solid #d8d8d8;box-sizing:border-box;"></div>
<div style="left:499px;top:240px;width:90px;height:24px;background:#f0f0f0;"></div>
<div style="left:502.7px;top:241.68px;font-size:16.8px;line-height:21.0px;color:#222;font-weight:normal;font-family:'Liberation Sans', sans-serif;white-space:nowrap;">SQL Query</div>
<div style="left:507.5px;top:278px;width:1999px;height:633px;background:#fff;border-top:1px solid #a0a0a0;border-left:1px solid #a0a0a0;box-sizing:border-box;"></div>
<svg style="left:2511px;top:285px" width="12" height="8" viewBox="0 0 12 8"><path d="M1 7 L6 1.5 L11 7 Z" fill="#9a9a9a"/></svg>
<svg style="left:2511px;top:897px" width="12" height="8" viewBox="0 0 12 8"><path d="M1 1 L6 6.5 L11 1 Z" fill="#9a9a9a"/></svg>
<div style="left:510.7px;top:285.18px;font-size:14.6px;line-height:18.25px;color:#1f1fff;font-weight:bold;font-family:'Liberation Mono', monospace;white-space:nowrap;">SELECT</div>
<div style="left:575.3px;top:285.06px;font-size:19px;line-height:23.75px;color:#333;font-weight:normal;font-family:'Liberation Mono', monospace;white-space:nowrap;">*</div>
<div style="left:601.1px;top:284.92px;font-size:14.9px;line-height:18.62px;color:#1f1fff;font-weight:bold;font-family:'Liberation Mono', monospace;white-space:nowrap;">FROM</div>
<div style="left:647.0px;top:281.48px;font-size:21px;line-height:26.25px;color:#3a3a3a;font-weight:normal;font-family:'Liberation Mono', monospace;white-space:nowrap;">general_ledger</div>
<div style="left:505.6px;top:939px;width:161.2px;height:36px;background:#e3e3e8;"></div>
<div style="left:507.6px;top:941px;width:157.2px;height:32px;background:#fdfdfd;border:1px solid #d0d0d0;border-bottom-color:#bdbdbd;border-radius:4px;box-sizing:border-box;"></div>
<div style="left:680.4px;top:939px;width:61.6px;height:36px;background:#e3e3e8;"></div>
<div style="left:682.4px;top:941px;width:57.6px;height:32px;background:#fdfdfd;border:1px solid #d0d0d0;border-bottom-color:#bdbdbd;border-radius:4px;box-sizing:border-box;"></div>
<div style="left:755.2px;top:939px;width:171.9px;height:36px;background:#e3e3e8;"></div>
<div style="left:757.2px;top:941px;width:167.9px;height:32px;background:#fdfdfd;border:1px solid #d0d0d0;border-bottom-color:#bdbdbd;border-radius:4px;box-sizing:border-box;"></div>
<div style="left:940px;top:939px;width:172.4px;height:36px;background:#e3e3e8;"></div>
<div style="left:942px;top:941px;width:168.4px;height:32px;background:#fdfdfd;border:1px solid #d0d0d0;border-bottom-color:#bdbdbd;border-radius:4px;box-sizing:border-box;"></div>
<div style="left:1125.5px;top:939px;width:191.7px;height:36px;background:#e3e3e8;"></div>
<div style="left:1127.5px;top:941px;width:187.7px;height:32px;background:#fdfdfd;border:1px solid #d0d0d0;border-bottom-color:#bdbdbd;border-radius:4px;box-sizing:border-box;"></div>
<div style="left:1330px;top:939px;width:172.3px;height:36px;background:#e3e3e8;"></div>
<div style="left:1332px;top:941px;width:168.3px;height:32px;background:#fdfdfd;border:1px solid #d0d0d0;border-bottom-color:#bdbdbd;border-radius:4px;box-sizing:border-box;"></div>
<div style="left:1514.8px;top:939px;width:182.7px;height:36px;background:#e3e3e8;"></div>
<div style="left:1516.8px;top:941px;width:178.7px;height:32px;background:#fdfdfd;border:1px solid #d0d0d0;border-bottom-color:#bdbdbd;border-radius:4px;box-sizing:border-box;"></div>
<div style="left:1709.7px;top:939px;width:191.7px;height:36px;background:#e3e3e8;"></div>
<div style="left:1711.7px;top:941px;width:187.7px;height:32px;background:#fdfdfd;border:1px solid #d0d0d0;border-bottom-color:#bdbdbd;border-radius:4px;box-sizing:border-box;"></div>
<svg style="left:532px;top:948.3px" width="20" height="19" viewBox="0 0 20 19"><rect x="1" y="1" width="17" height="17" rx="2.5" fill="none" stroke="#111" stroke-width="1.8"/><path d="M6.5 4.5 V14.5 L14 9.5 Z" fill="#111"/></svg>
<div style="left:559.7px;top:947.62px;font-size:16.96px;line-height:21.2px;color:#000;font-weight:normal;font-family:'Liberation Sans', sans-serif;white-space:nowrap;">Run Query</div>
<svg style="left:701px;top:948.3px" width="20" height="19" viewBox="0 0 20 19"><rect x="1" y="1" width="17" height="17" rx="2.5" fill="none" stroke="#111" stroke-width="1.8"/><path d="M6.5 4.5 V14.5 L14 9.5 Z" fill="#111"/></svg>
<svg style="left:773.5px;top:948px" width="19" height="19.5" viewBox="0 0 19 19.5"><path d="M2 3 L3.8 16 H15.2 L17 3 Z" fill="#1a1a1a"/><g stroke="#dfe6ee" stroke-width="0.9"><path d="M5.5 4 V15 M9.5 4 V15 M13.5 4 V15"/><path d="M3 7.5 H16 M3.4 11.2 H15.6"/></g><rect x="0.5" y="0.6" width="18" height="3" rx="1" fill="#333"/><path d="M1.5 2 H17.5" stroke="#aaa" stroke-width="0.8"/><rect x="3.3" y="15.6" width="12.4" height="3.4" rx="1" fill="#444"/><path d="M4 16.8 H15" stroke="#bbb" stroke-width="0.7"/></svg>
<div style="left:819px;top:947.78px;font-size:16.8px;line-height:21.0px;color:#000;font-weight:normal;font-family:'Liberation Sans', sans-serif;white-space:nowrap;">Clear Query</div>
<div style="left:971.5px;top:947.1px;font-size:17.5px;line-height:21.88px;color:#000;font-weight:bold;font-family:'Liberation Sans', sans-serif;white-space:nowrap;">?</div>
<div style="left:995.2px;top:948.01px;font-size:16.56px;line-height:20.7px;color:#000;font-weight:normal;font-family:'Liberation Sans', sans-serif;white-space:nowrap;">Syntax Help</div>
<svg style="left:1154px;top:947px" width="20" height="20" viewBox="0 0 20 20"><path d="M1.5 1.5 h14 l3 3 v14 h-17 Z" fill="none" stroke="#111" stroke-width="1.8"/><rect x="5" y="1.5" width="9" height="6" fill="none" stroke="#111" stroke-width="1.6"/><rect x="4.5" y="11" width="11" height="7" fill="none" stroke="#111" stroke-width="1.6"/></svg>
<div style="left:1180.9px;top:948.05px;font-size:16.52px;line-height:20.65px;color:#000;font-weight:normal;font-family:'Liberation Sans', sans-serif;white-space:nowrap;">Export Results</div>
<svg style="left:1355px;top:948.7px" width="19" height="18" viewBox="0 0 19 18"><rect x="0.7" y="0.7" width="17.6" height="16.6" rx="2.2" fill="none" stroke="#111" stroke-width="1.3"/><rect x="2.6" y="4.8" width="3.9" height="12.4" fill="#111"/><rect x="7.5" y="9.8" width="3.9" height="7.4" fill="#111"/><rect x="12.3" y="2.6" width="3.9" height="14.6" fill="#111"/></svg>
<div style="left:1380.9px;top:947.64px;font-size:16.94px;line-height:21.18px;color:#000;font-weight:normal;font-family:'Liberation Sans', sans-serif;white-space:nowrap;">Create Chart</div>
<div style="left:1539px;top:947.58px;font-size:17px;line-height:21.25px;color:#111;font-weight:normal;font-family:'Liberation Sans', sans-serif;white-space:nowrap;">✓</div>
<div style="left:1557px;top:947.39px;font-size:17.2px;line-height:21.5px;color:#000;font-weight:normal;font-family:'Liberation Sans', sans-serif;white-space:nowrap;">Validate Query</div>
<svg style="left:1733px;top:948px" width="21" height="18" viewBox="0 0 21 18"><path d="M1.5 3 h6 l2 2 h8 v3" fill="none" stroke="#111" stroke-width="1.6" stroke-linejoin="round"/><path d="M1.5 3 v13 h15 l3.5 -8 H5 L1.5 16" fill="none" stroke="#111" stroke-width="1.6" stroke-linejoin="round"/></svg>
<div style="left:1760.8px;top:947.39px;font-size:17.2px;line-height:21.5px;color:#000;font-weight:normal;font-family:'Liberation Sans', sans-serif;white-space:nowrap;">Add to Browser</div>
<div style="left:493px;top:1000.5px;width:2042px;height:482px;border-top:1px solid #dcdcdc;border-left:1px solid #dcdcdc;border-bottom:1px solid #d8d8d8;box-sizing:border-box;"></div>
<div style="left:499px;top:988px;width:114px;height:24px;background:#f0f0f0;"></div>
<div style="left:503.1px;top:990.1px;font-size:16.57px;line-height:20.71px;color:#222;font-weight:normal;font-family:'Liberation Sans', sans-serif;white-space:nowrap;">Query Results</div>
<div style="left:492px;top:1487px;width:2043px;height:1px;background:#d8d8d8;"></div>
<div style="left:507.6px;top:1026.4px;width:1998.4px;height:421px;background:#fff;border-top:1.6px solid #a0a0a0;border-left:1px solid #a8a8a8;box-sizing:border-box;"></div>
<div style="left:520.9px;top:1032.53px;font-size:15.0px;line-height:18.75px;color:#1a1a1a;font-weight:normal;font-family:'Liberation Sans', sans-serif;white-space:nowrap;-webkit-text-stroke:0.2px #1a1a1a;">journal_number</div>
<div style="left:672.7px;top:1028px;width:1px;height:29.3px;background:#e3e3e3;"></div>
<div style="left:685.6px;top:1032.53px;font-size:15.0px;line-height:18.75px;color:#1a1a1a;font-weight:normal;font-family:'Liberation Sans', sans-serif;white-space:nowrap;-webkit-text-stroke:0.2px #1a1a1a;">account</div>
<div style="left:797.3px;top:1028px;width:1px;height:29.3px;background:#e3e3e3;"></div>
<div style="left:810.1999999999999px;top:1032.53px;font-size:15.0px;line-height:18.75px;color:#1a1a1a;font-weight:normal;font-family:'Liberation Sans', sans-serif;white-space:nowrap;-webkit-text-stroke:0.2px #1a1a1a;">debit_amount</div>
<div style="left:942.3px;top:1028px;width:1px;height:29.3px;background:#e3e3e3;"></div>
<div style="left:955.1999999999999px;top:1032.53px;font-size:15.0px;line-height:18.75px;color:#1a1a1a;font-weight:normal;font-family:'Liberation Sans', sans-serif;white-space:nowrap;-webkit-text-stroke:0.2px #1a1a1a;">credit_amount</div>
<div style="left:1097.0px;top:1028px;width:1px;height:29.3px;background:#e3e3e3;"></div>
<div style="left:1109.9px;top:1032.53px;font-size:15.0px;line-height:18.75px;color:#1a1a1a;font-weight:normal;font-family:'Liberation Sans', sans-serif;white-space:nowrap;-webkit-text-stroke:0.2px #1a1a1a;">entry_date</div>
<div style="left:1222.5px;top:1028px;width:1px;height:29.3px;background:#e3e3e3;"></div>
<div style="left:1235.4px;top:1032.53px;font-size:15.0px;line-height:18.75px;color:#1a1a1a;font-weight:normal;font-family:'Liberation Sans', sans-serif;white-space:nowrap;-webkit-text-stroke:0.2px #1a1a1a;">effective_date</div>
<div style="left:1386.9px;top:1028px;width:1px;height:29.3px;background:#e3e3e3;"></div>
<div style="left:1399.8000000000002px;top:1032.53px;font-size:15.0px;line-height:18.75px;color:#1a1a1a;font-weight:normal;font-family:'Liberation Sans', sans-serif;white-space:nowrap;-webkit-text-stroke:0.2px #1a1a1a;">posting_time</div>
<div style="left:1532.2px;top:1028px;width:1px;height:29.3px;background:#e3e3e3;"></div>
<div style="left:1545.1000000000001px;top:1032.53px;font-size:15.0px;line-height:18.75px;color:#1a1a1a;font-weight:normal;font-family:'Liberation Sans', sans-serif;white-space:nowrap;-webkit-text-stroke:0.2px #1a1a1a;">description</div>
<div style="left:1827.0px;top:1028px;width:1px;height:29.3px;background:#e3e3e3;"></div>
<div style="left:1839.9px;top:1032.53px;font-size:15.0px;line-height:18.75px;color:#1a1a1a;font-weight:normal;font-family:'Liberation Sans', sans-serif;white-space:nowrap;-webkit-text-stroke:0.2px #1a1a1a;">entity</div>
<div style="left:2061.8px;top:1028px;width:1px;height:29.3px;background:#e3e3e3;"></div>
<div style="left:2074.7000000000003px;top:1032.53px;font-size:15.0px;line-height:18.75px;color:#1a1a1a;font-weight:normal;font-family:'Liberation Sans', sans-serif;white-space:nowrap;-webkit-text-stroke:0.2px #1a1a1a;">entry_source</div>
<div style="left:2206.9px;top:1028px;width:1px;height:29.3px;background:#e3e3e3;"></div>
<div style="left:2219.8px;top:1032.53px;font-size:15.0px;line-height:18.75px;color:#1a1a1a;font-weight:normal;font-family:'Liberation Sans', sans-serif;white-space:nowrap;-webkit-text-stroke:0.2px #1a1a1a;">created_by</div>
<div style="left:2372.0px;top:1028px;width:1px;height:29.3px;background:#e3e3e3;"></div>
<div style="left:2384.9px;top:1032.53px;font-size:15.0px;line-height:18.75px;color:#1a1a1a;font-weight:normal;font-family:'Liberation Sans', sans-serif;white-space:nowrap;-webkit-text-stroke:0.2px #1a1a1a;">approved_by</div>
<div style="left:513.8px;top:1063.9px;font-size:14.0px;line-height:17.5px;color:#111;font-weight:normal;font-family:'Liberation Sans', sans-serif;white-space:nowrap;letter-spacing:-0.5px;">JE0131043</div>
<div style="left:678.5px;top:1063.9px;font-size:14.0px;line-height:17.5px;color:#111;font-weight:normal;font-family:'Liberation Sans', sans-serif;white-space:nowrap;letter-spacing:-0.5px;">2020</div>
<div style="left:803.0999999999999px;top:1063.9px;font-size:14.0px;line-height:17.5px;color:#111;font-weight:normal;font-family:'Liberation Sans', sans-serif;white-space:nowrap;letter-spacing:-0.5px;">0.0</div>
<div style="left:948.0999999999999px;top:1063.9px;font-size:14.0px;line-height:17.5px;color:#111;font-weight:normal;font-family:'Liberation Sans', sans-serif;white-space:nowrap;letter-spacing:-0.5px;">4519.32</div>
<div style="left:1102.8px;top:1063.9px;font-size:14.0px;line-height:17.5px;color:#111;font-weight:normal;font-family:'Liberation Sans', sans-serif;white-space:nowrap;letter-spacing:-0.5px;">2023-03-18</div>
<div style="left:1228.3px;top:1063.9px;font-size:14.0px;line-height:17.5px;color:#111;font-weight:normal;font-family:'Liberation Sans', sans-serif;white-space:nowrap;letter-spacing:-0.5px;">2023-03-18</div>
<div style="left:1392.7px;top:1063.9px;font-size:14.0px;line-height:17.5px;color:#111;font-weight:normal;font-family:'Liberation Sans', sans-serif;white-space:nowrap;letter-spacing:-0.5px;">17:09:32</div>
<div style="left:1538.0px;top:1063.46px;font-size:14.45px;line-height:18.06px;color:#111;font-weight:normal;font-family:'Liberation Sans', sans-serif;white-space:nowrap;">VAT on sales</div>
<div style="left:1832.8px;top:1063.46px;font-size:14.45px;line-height:18.06px;color:#111;font-weight:normal;font-family:'Liberation Sans', sans-serif;white-space:nowrap;">Prestige Menlyn</div>
<div style="left:2067.6000000000004px;top:1063.46px;font-size:14.45px;line-height:18.06px;color:#111;font-weight:normal;font-family:'Liberation Sans', sans-serif;white-space:nowrap;">Sales_Module</div>
<div style="left:2212.7000000000003px;top:1063.46px;font-size:14.45px;line-height:18.06px;color:#111;font-weight:normal;font-family:'Liberation Sans', sans-serif;white-space:nowrap;">Acc_JPretorius</div>
<div style="left:2377.8px;top:1063.46px;font-size:14.45px;line-height:18.06px;color:#111;font-weight:normal;font-family:'Liberation Sans', sans-serif;white-space:nowrap;">FinDir_KZulu</div>
<div style="left:513.8px;top:1093.9px;font-size:14.0px;line-height:17.5px;color:#111;font-weight:normal;font-family:'Liberation Sans', sans-serif;white-space:nowrap;letter-spacing:-0.5px;">JE0242440</div>
<div style="left:678.5px;top:1093.9px;font-size:14.0px;line-height:17.5px;color:#111;font-weight:normal;font-family:'Liberation Sans', sans-serif;white-space:nowrap;letter-spacing:-0.5px;">5000</div>
<div style="left:803.0999999999999px;top:1093.9px;font-size:14.0px;line-height:17.5px;color:#111;font-weight:normal;font-family:'Liberation Sans', sans-serif;white-space:nowrap;letter-spacing:-0.5px;">936267.69</div>
<div style="left:948.0999999999999px;top:1093.9px;font-size:14.0px;line-height:17.5px;color:#111;font-weight:normal;font-family:'Liberation Sans', sans-serif;white-space:nowrap;letter-spacing:-0.5px;">0.0</div>
<div style="left:1102.8px;top:1093.9px;font-size:14.0px;line-height:17.5px;color:#111;font-weight:normal;font-family:'Liberation Sans', sans-serif;white-space:nowrap;letter-spacing:-0.5px;">2023-07-31</div>
<div style="left:1228.3px;top:1093.9px;font-size:14.0px;line-height:17.5px;color:#111;font-weight:normal;font-family:'Liberation Sans', sans-serif;white-space:nowrap;letter-spacing:-0.5px;">2023-07-31</div>
<div style="left:1392.7px;top:1093.9px;font-size:14.0px;line-height:17.5px;color:#111;font-weight:normal;font-family:'Liberation Sans', sans-serif;white-space:nowrap;letter-spacing:-0.5px;">17:24:57</div>
<div style="left:1538.0px;top:1093.46px;font-size:14.45px;line-height:18.06px;color:#111;font-weight:normal;font-family:'Liberation Sans', sans-serif;white-space:nowrap;">COGS - New Vehicle</div>
<div style="left:1832.8px;top:1093.46px;font-size:14.45px;line-height:18.06px;color:#111;font-weight:normal;font-family:'Liberation Sans', sans-serif;white-space:nowrap;">Prestige Stellenbosch</div>
<div style="left:2067.6000000000004px;top:1093.46px;font-size:14.45px;line-height:18.06px;color:#111;font-weight:normal;font-family:'Liberation Sans', sans-serif;white-space:nowrap;">Sales_Module</div>
<div style="left:2212.7000000000003px;top:1093.46px;font-size:14.45px;line-height:18.06px;color:#111;font-weight:normal;font-family:'Liberation Sans', sans-serif;white-space:nowrap;">Acc_RVanWyk</div>
<div style="left:2377.8px;top:1093.46px;font-size:14.45px;line-height:18.06px;color:#111;font-weight:normal;font-family:'Liberation Sans', sans-serif;white-space:nowrap;">FinMgr_PVenter</div>
<div style="left:513.8px;top:1123.9px;font-size:14.0px;line-height:17.5px;color:#111;font-weight:normal;font-family:'Liberation Sans', sans-serif;white-space:nowrap;letter-spacing:-0.5px;">JE0199871</div>
<div style="left:678.5px;top:1123.9px;font-size:14.0px;line-height:17.5px;color:#111;font-weight:normal;font-family:'Liberation Sans', sans-serif;white-space:nowrap;letter-spacing:-0.5px;">4000</div>
<div style="left:803.0999999999999px;top:1123.9px;font-size:14.0px;line-height:17.5px;color:#111;font-weight:normal;font-family:'Liberation Sans', sans-serif;white-space:nowrap;letter-spacing:-0.5px;">0.0</div>
<div style="left:948.0999999999999px;top:1123.9px;font-size:14.0px;line-height:17.5px;color:#111;font-weight:normal;font-family:'Liberation Sans', sans-serif;white-space:nowrap;letter-spacing:-0.5px;">1782006.36</div>
<div style="left:1102.8px;top:1123.9px;font-size:14.0px;line-height:17.5px;color:#111;font-weight:normal;font-family:'Liberation Sans', sans-serif;white-space:nowrap;letter-spacing:-0.5px;">2025-12-01</div>
<div style="left:1228.3px;top:1123.9px;font-size:14.0px;line-height:17.5px;color:#111;font-weight:normal;font-family:'Liberation Sans', sans-serif;white-space:nowrap;letter-spacing:-0.5px;">2025-12-01</div>
<div style="left:1392.7px;top:1123.9px;font-size:14.0px;line-height:17.5px;color:#111;font-weight:normal;font-family:'Liberation Sans', sans-serif;white-space:nowrap;letter-spacing:-0.5px;">08:46:07</div>
<div style="left:1538.0px;top:1123.46px;font-size:14.45px;line-height:18.06px;color:#111;font-weight:normal;font-family:'Liberation Sans', sans-serif;white-space:nowrap;">Sales - New Vehicle</div>
<div style="left:1832.8px;top:1123.46px;font-size:14.45px;line-height:18.06px;color:#111;font-weight:normal;font-family:'Liberation Sans', sans-serif;white-space:nowrap;">Prestige Stellenbosch</div>
<div style="left:2067.6000000000004px;top:1123.46px;font-size:14.45px;line-height:18.06px;color:#111;font-weight:normal;font-family:'Liberation Sans', sans-serif;white-space:nowrap;">Sales_Module</div>
<div style="left:2212.7000000000003px;top:1123.46px;font-size:14.45px;line-height:18.06px;color:#111;font-weight:normal;font-family:'Liberation Sans', sans-serif;white-space:nowrap;">Acc_SRadebe</div>
<div style="left:2377.8px;top:1123.46px;font-size:14.45px;line-height:18.06px;color:#111;font-weight:normal;font-family:'Liberation Sans', sans-serif;white-space:nowrap;">AuditPartner_X</div>
<div style="left:513.8px;top:1153.9px;font-size:14.0px;line-height:17.5px;color:#111;font-weight:normal;font-family:'Liberation Sans', sans-serif;white-space:nowrap;letter-spacing:-0.5px;">JE0247029</div>
<div style="left:678.5px;top:1153.9px;font-size:14.0px;line-height:17.5px;color:#111;font-weight:normal;font-family:'Liberation Sans', sans-serif;white-space:nowrap;letter-spacing:-0.5px;">1200</div>
<div style="left:803.0999999999999px;top:1153.9px;font-size:14.0px;line-height:17.5px;color:#111;font-weight:normal;font-family:'Liberation Sans', sans-serif;white-space:nowrap;letter-spacing:-0.5px;">0.0</div>
<div style="left:948.0999999999999px;top:1153.9px;font-size:14.0px;line-height:17.5px;color:#111;font-weight:normal;font-family:'Liberation Sans', sans-serif;white-space:nowrap;letter-spacing:-0.5px;">9159.31</div>
<div style="left:1102.8px;top:1153.9px;font-size:14.0px;line-height:17.5px;color:#111;font-weight:normal;font-family:'Liberation Sans', sans-serif;white-space:nowrap;letter-spacing:-0.5px;">2023-10-06</div>
<div style="left:1228.3px;top:1153.9px;font-size:14.0px;line-height:17.5px;color:#111;font-weight:normal;font-family:'Liberation Sans', sans-serif;white-space:nowrap;letter-spacing:-0.5px;">2023-10-06</div>
<div style="left:1392.7px;top:1153.9px;font-size:14.0px;line-height:17.5px;color:#111;font-weight:normal;font-family:'Liberation Sans', sans-serif;white-space:nowrap;letter-spacing:-0.5px;">08:36:23</div>
<div style="left:1538.0px;top:1153.46px;font-size:14.45px;line-height:18.06px;color:#111;font-weight:normal;font-family:'Liberation Sans', sans-serif;white-space:nowrap;">Inventory reduction</div>
<div style="left:1832.8px;top:1153.46px;font-size:14.45px;line-height:18.06px;color:#111;font-weight:normal;font-family:'Liberation Sans', sans-serif;white-space:nowrap;">Prestige Stellenbosch</div>
<div style="left:2067.6000000000004px;top:1153.46px;font-size:14.45px;line-height:18.06px;color:#111;font-weight:normal;font-family:'Liberation Sans', sans-serif;white-space:nowrap;">Sales_Module</div>
<div style="left:2212.7000000000003px;top:1153.46px;font-size:14.45px;line-height:18.06px;color:#111;font-weight:normal;font-family:'Liberation Sans', sans-serif;white-space:nowrap;">Acc_SNgcobo</div>
<div style="left:2377.8px;top:1153.46px;font-size:14.45px;line-height:18.06px;color:#111;font-weight:normal;font-family:'Liberation Sans', sans-serif;white-space:nowrap;">FinMgr_TMaseko</div>
<div style="left:513.8px;top:1183.9px;font-size:14.0px;line-height:17.5px;color:#111;font-weight:normal;font-family:'Liberation Sans', sans-serif;white-space:nowrap;letter-spacing:-0.5px;">JE0157600</div>
<div style="left:678.5px;top:1183.9px;font-size:14.0px;line-height:17.5px;color:#111;font-weight:normal;font-family:'Liberation Sans', sans-serif;white-space:nowrap;letter-spacing:-0.5px;">2020</div>
<div style="left:803.0999999999999px;top:1183.9px;font-size:14.0px;line-height:17.5px;color:#111;font-weight:normal;font-family:'Liberation Sans', sans-serif;white-space:nowrap;letter-spacing:-0.5px;">0.0</div>
<div style="left:948.0999999999999px;top:1183.9px;font-size:14.0px;line-height:17.5px;color:#111;font-weight:normal;font-family:'Liberation Sans', sans-serif;white-space:nowrap;letter-spacing:-0.5px;">695.01</div>
<div style="left:1102.8px;top:1183.9px;font-size:14.0px;line-height:17.5px;color:#111;font-weight:normal;font-family:'Liberation Sans', sans-serif;white-space:nowrap;letter-spacing:-0.5px;">2024-03-26</div>
<div style="left:1228.3px;top:1183.9px;font-size:14.0px;line-height:17.5px;color:#111;font-weight:normal;font-family:'Liberation Sans', sans-serif;white-space:nowrap;letter-spacing:-0.5px;">2024-03-26</div>
<div style="left:1392.7px;top:1183.9px;font-size:14.0px;line-height:17.5px;color:#111;font-weight:normal;font-family:'Liberation Sans', sans-serif;white-space:nowrap;letter-spacing:-0.5px;">09:49:06</div>
<div style="left:1538.0px;top:1183.46px;font-size:14.45px;line-height:18.06px;color:#111;font-weight:normal;font-family:'Liberation Sans', sans-serif;white-space:nowrap;">VAT on sales</div>
<div style="left:1832.8px;top:1183.46px;font-size:14.45px;line-height:18.06px;color:#111;font-weight:normal;font-family:'Liberation Sans', sans-serif;white-space:nowrap;">Prestige Menlyn</div>
<div style="left:2067.6000000000004px;top:1183.46px;font-size:14.45px;line-height:18.06px;color:#111;font-weight:normal;font-family:'Liberation Sans', sans-serif;white-space:nowrap;">Sales_Module</div>
<div style="left:2212.7000000000003px;top:1183.46px;font-size:14.45px;line-height:18.06px;color:#111;font-weight:normal;font-family:'Liberation Sans', sans-serif;white-space:nowrap;">Acc_RVanWyk</div>
<div style="left:2377.8px;top:1183.46px;font-size:14.45px;line-height:18.06px;color:#111;font-weight:normal;font-family:'Liberation Sans', sans-serif;white-space:nowrap;">FinMgr_TMaseko</div>
<div style="left:513.8px;top:1213.9px;font-size:14.0px;line-height:17.5px;color:#111;font-weight:normal;font-family:'Liberation Sans', sans-serif;white-space:nowrap;letter-spacing:-0.5px;">JE0116521</div>
<div style="left:678.5px;top:1213.9px;font-size:14.0px;line-height:17.5px;color:#111;font-weight:normal;font-family:'Liberation Sans', sans-serif;white-space:nowrap;letter-spacing:-0.5px;">2020</div>
<div style="left:803.0999999999999px;top:1213.9px;font-size:14.0px;line-height:17.5px;color:#111;font-weight:normal;font-family:'Liberation Sans', sans-serif;white-space:nowrap;letter-spacing:-0.5px;">0.0</div>
<div style="left:948.0999999999999px;top:1213.9px;font-size:14.0px;line-height:17.5px;color:#111;font-weight:normal;font-family:'Liberation Sans', sans-serif;white-space:nowrap;letter-spacing:-0.5px;">48024.63</div>
<div style="left:1102.8px;top:1213.9px;font-size:14.0px;line-height:17.5px;color:#111;font-weight:normal;font-family:'Liberation Sans', sans-serif;white-space:nowrap;letter-spacing:-0.5px;">2022-08-23</div>
<div style="left:1228.3px;top:1213.9px;font-size:14.0px;line-height:17.5px;color:#111;font-weight:normal;font-family:'Liberation Sans', sans-serif;white-space:nowrap;letter-spacing:-0.5px;">2022-08-23</div>
<div style="left:1392.7px;top:1213.9px;font-size:14.0px;line-height:17.5px;color:#111;font-weight:normal;font-family:'Liberation Sans', sans-serif;white-space:nowrap;letter-spacing:-0.5px;">11:04:18</div>
<div style="left:1538.0px;top:1213.46px;font-size:14.45px;line-height:18.06px;color:#111;font-weight:normal;font-family:'Liberation Sans', sans-serif;white-space:nowrap;">VAT on sales</div>
<div style="left:1832.8px;top:1213.46px;font-size:14.45px;line-height:18.06px;color:#111;font-weight:normal;font-family:'Liberation Sans', sans-serif;white-space:nowrap;">Prestige Stellenbosch</div>
<div style="left:2067.6000000000004px;top:1213.46px;font-size:14.45px;line-height:18.06px;color:#111;font-weight:normal;font-family:'Liberation Sans', sans-serif;white-space:nowrap;">Sales_Module</div>
<div style="left:2212.7000000000003px;top:1213.46px;font-size:14.45px;line-height:18.06px;color:#111;font-weight:normal;font-family:'Liberation Sans', sans-serif;white-space:nowrap;">Acc_LDlamini</div>
<div style="left:2377.8px;top:1213.46px;font-size:14.45px;line-height:18.06px;color:#111;font-weight:normal;font-family:'Liberation Sans', sans-serif;white-space:nowrap;">FinMgr_JJordaan</div>
<div style="left:513.8px;top:1243.9px;font-size:14.0px;line-height:17.5px;color:#111;font-weight:normal;font-family:'Liberation Sans', sans-serif;white-space:nowrap;letter-spacing:-0.5px;">JE0152985</div>
<div style="left:678.5px;top:1243.9px;font-size:14.0px;line-height:17.5px;color:#111;font-weight:normal;font-family:'Liberation Sans', sans-serif;white-space:nowrap;letter-spacing:-0.5px;">1100</div>
<div style="left:803.0999999999999px;top:1243.9px;font-size:14.0px;line-height:17.5px;color:#111;font-weight:normal;font-family:'Liberation Sans', sans-serif;white-space:nowrap;letter-spacing:-0.5px;">12998.54</div>
<div style="left:948.0999999999999px;top:1243.9px;font-size:14.0px;line-height:17.5px;color:#111;font-weight:normal;font-family:'Liberation Sans', sans-serif;white-space:nowrap;letter-spacing:-0.5px;">0.0</div>
<div style="left:1102.8px;top:1243.9px;font-size:14.0px;line-height:17.5px;color:#111;font-weight:normal;font-family:'Liberation Sans', sans-serif;white-space:nowrap;letter-spacing:-0.5px;">2024-01-23</div>
<div style="left:1228.3px;top:1243.9px;font-size:14.0px;line-height:17.5px;color:#111;font-weight:normal;font-family:'Liberation Sans', sans-serif;white-space:nowrap;letter-spacing:-0.5px;">2024-01-23</div>
<div style="left:1392.7px;top:1243.9px;font-size:14.0px;line-height:17.5px;color:#111;font-weight:normal;font-family:'Liberation Sans', sans-serif;white-space:nowrap;letter-spacing:-0.5px;">17:56:55</div>
<div style="left:1538.0px;top:1243.46px;font-size:14.45px;line-height:18.06px;color:#111;font-weight:normal;font-family:'Liberation Sans', sans-serif;white-space:nowrap;">Revenue - Accessories</div>
<div style="left:1832.8px;top:1243.46px;font-size:14.45px;line-height:18.06px;color:#111;font-weight:normal;font-family:'Liberation Sans', sans-serif;white-space:nowrap;">Prestige Menlyn</div>
<div style="left:2067.6000000000004px;top:1243.46px;font-size:14.45px;line-height:18.06px;color:#111;font-weight:normal;font-family:'Liberation Sans', sans-serif;white-space:nowrap;">Sales_Module</div>
<div style="left:2212.7000000000003px;top:1243.46px;font-size:14.45px;line-height:18.06px;color:#111;font-weight:normal;font-family:'Liberation Sans', sans-serif;white-space:nowrap;">Acc_SNgcobo</div>
<div style="left:2377.8px;top:1243.46px;font-size:14.45px;line-height:18.06px;color:#111;font-weight:normal;font-family:'Liberation Sans', sans-serif;white-space:nowrap;">FinMgr_TMaseko</div>
<div style="left:513.8px;top:1273.9px;font-size:14.0px;line-height:17.5px;color:#111;font-weight:normal;font-family:'Liberation Sans', sans-serif;white-space:nowrap;letter-spacing:-0.5px;">JE0146283</div>
<div style="left:678.5px;top:1273.9px;font-size:14.0px;line-height:17.5px;color:#111;font-weight:normal;font-family:'Liberation Sans', sans-serif;white-space:nowrap;letter-spacing:-0.5px;">4030</div>
<div style="left:803.0999999999999px;top:1273.9px;font-size:14.0px;line-height:17.5px;color:#111;font-weight:normal;font-family:'Liberation Sans', sans-serif;white-space:nowrap;letter-spacing:-0.5px;">0.0</div>
<div style="left:948.0999999999999px;top:1273.9px;font-size:14.0px;line-height:17.5px;color:#111;font-weight:normal;font-family:'Liberation Sans', sans-serif;white-space:nowrap;letter-spacing:-0.5px;">33665.05</div>
<div style="left:1102.8px;top:1273.9px;font-size:14.0px;line-height:17.5px;color:#111;font-weight:normal;font-family:'Liberation Sans', sans-serif;white-space:nowrap;letter-spacing:-0.5px;">2023-10-21</div>
<div style="left:1228.3px;top:1273.9px;font-size:14.0px;line-height:17.5px;color:#111;font-weight:normal;font-family:'Liberation Sans', sans-serif;white-space:nowrap;letter-spacing:-0.5px;">2023-10-21</div>
<div style="left:1392.7px;top:1273.9px;font-size:14.0px;line-height:17.5px;color:#111;font-weight:normal;font-family:'Liberation Sans', sans-serif;white-space:nowrap;letter-spacing:-0.5px;">13:51:17</div>
<div style="left:1538.0px;top:1273.46px;font-size:14.45px;line-height:18.06px;color:#111;font-weight:normal;font-family:'Liberation Sans', sans-serif;white-space:nowrap;">Sales - Service</div>
<div style="left:1832.8px;top:1273.46px;font-size:14.45px;line-height:18.06px;color:#111;font-weight:normal;font-family:'Liberation Sans', sans-serif;white-space:nowrap;">Prestige Menlyn</div>
<div style="left:2067.6000000000004px;top:1273.46px;font-size:14.45px;line-height:18.06px;color:#111;font-weight:normal;font-family:'Liberation Sans', sans-serif;white-space:nowrap;">Sales_Module</div>
<div style="left:2212.7000000000003px;top:1273.46px;font-size:14.45px;line-height:18.06px;color:#111;font-weight:normal;font-family:'Liberation Sans', sans-serif;white-space:nowrap;">Acc_RVanWyk</div>
<div style="left:2377.8px;top:1273.46px;font-size:14.45px;line-height:18.06px;color:#111;font-weight:normal;font-family:'Liberation Sans', sans-serif;white-space:nowrap;">CFO_RBotha</div>
<div style="left:513.8px;top:1303.9px;font-size:14.0px;line-height:17.5px;color:#111;font-weight:normal;font-family:'Liberation Sans', sans-serif;white-space:nowrap;letter-spacing:-0.5px;">JE0131919</div>
<div style="left:678.5px;top:1303.9px;font-size:14.0px;line-height:17.5px;color:#111;font-weight:normal;font-family:'Liberation Sans', sans-serif;white-space:nowrap;letter-spacing:-0.5px;">4020</div>
<div style="left:803.0999999999999px;top:1303.9px;font-size:14.0px;line-height:17.5px;color:#111;font-weight:normal;font-family:'Liberation Sans', sans-serif;white-space:nowrap;letter-spacing:-0.5px;">0.0</div>
<div style="left:948.0999999999999px;top:1303.9px;font-size:14.0px;line-height:17.5px;color:#111;font-weight:normal;font-family:'Liberation Sans', sans-serif;white-space:nowrap;letter-spacing:-0.5px;">16283.99</div>
<div style="left:1102.8px;top:1303.9px;font-size:14.0px;line-height:17.5px;color:#111;font-weight:normal;font-family:'Liberation Sans', sans-serif;white-space:nowrap;letter-spacing:-0.5px;">2023-04-01</div>
<div style="left:1228.3px;top:1303.9px;font-size:14.0px;line-height:17.5px;color:#111;font-weight:normal;font-family:'Liberation Sans', sans-serif;white-space:nowrap;letter-spacing:-0.5px;">2023-04-01</div>
<div style="left:1392.7px;top:1303.9px;font-size:14.0px;line-height:17.5px;color:#111;font-weight:normal;font-family:'Liberation Sans', sans-serif;white-space:nowrap;letter-spacing:-0.5px;">15:30:20</div>
<div style="left:1538.0px;top:1303.46px;font-size:14.45px;line-height:18.06px;color:#111;font-weight:normal;font-family:'Liberation Sans', sans-serif;white-space:nowrap;">Sales - Finance Product</div>
<div style="left:1832.8px;top:1303.46px;font-size:14.45px;line-height:18.06px;color:#111;font-weight:normal;font-family:'Liberation Sans', sans-serif;white-space:nowrap;">Prestige Stellenbosch</div>
<div style="left:2067.6000000000004px;top:1303.46px;font-size:14.45px;line-height:18.06px;color:#111;font-weight:normal;font-family:'Liberation Sans', sans-serif;white-space:nowrap;">Sales_Module</div>
<div style="left:2212.7000000000003px;top:1303.46px;font-size:14.45px;line-height:18.06px;color:#111;font-weight:normal;font-family:'Liberation Sans', sans-serif;white-space:nowrap;">Acc_RVanWyk</div>
<div style="left:2377.8px;top:1303.46px;font-size:14.45px;line-height:18.06px;color:#111;font-weight:normal;font-family:'Liberation Sans', sans-serif;white-space:nowrap;">FinMgr_TMaseko</div>
<div style="left:513.8px;top:1333.9px;font-size:14.0px;line-height:17.5px;color:#111;font-weight:normal;font-family:'Liberation Sans', sans-serif;white-space:nowrap;letter-spacing:-0.5px;">JE0141288</div>
<div style="left:678.5px;top:1333.9px;font-size:14.0px;line-height:17.5px;color:#111;font-weight:normal;font-family:'Liberation Sans', sans-serif;white-space:nowrap;letter-spacing:-0.5px;">1100</div>
<div style="left:803.0999999999999px;top:1333.9px;font-size:14.0px;line-height:17.5px;color:#111;font-weight:normal;font-family:'Liberation Sans', sans-serif;white-space:nowrap;letter-spacing:-0.5px;">599945.78</div>
<div style="left:948.0999999999999px;top:1333.9px;font-size:14.0px;line-height:17.5px;color:#111;font-weight:normal;font-family:'Liberation Sans', sans-serif;white-space:nowrap;letter-spacing:-0.5px;">0.0</div>
<div style="left:1102.8px;top:1333.9px;font-size:14.0px;line-height:17.5px;color:#111;font-weight:normal;font-family:'Liberation Sans', sans-serif;white-space:nowrap;letter-spacing:-0.5px;">2023-08-11</div>
<div style="left:1228.3px;top:1333.9px;font-size:14.0px;line-height:17.5px;color:#111;font-weight:normal;font-family:'Liberation Sans', sans-serif;white-space:nowrap;letter-spacing:-0.5px;">2023-08-11</div>
<div style="left:1392.7px;top:1333.9px;font-size:14.0px;line-height:17.5px;color:#111;font-weight:normal;font-family:'Liberation Sans', sans-serif;white-space:nowrap;letter-spacing:-0.5px;">13:54:51</div>
<div style="left:1538.0px;top:1333.46px;font-size:14.45px;line-height:18.06px;color:#111;font-weight:normal;font-family:'Liberation Sans', sans-serif;white-space:nowrap;">Revenue - Pre-Owned Vehicle</div>
<div style="left:1832.8px;top:1333.46px;font-size:14.45px;line-height:18.06px;color:#111;font-weight:normal;font-family:'Liberation Sans', sans-serif;white-space:nowrap;">Prestige Menlyn</div>
<div style="left:2067.6000000000004px;top:1333.46px;font-size:14.45px;line-height:18.06px;color:#111;font-weight:normal;font-family:'Liberation Sans', sans-serif;white-space:nowrap;">Sales_Module</div>
<div style="left:2212.7000000000003px;top:1333.46px;font-size:14.45px;line-height:18.06px;color:#111;font-weight:normal;font-family:'Liberation Sans', sans-serif;white-space:nowrap;">Acc_NMkhize</div>
<div style="left:2377.8px;top:1333.46px;font-size:14.45px;line-height:18.06px;color:#111;font-weight:normal;font-family:'Liberation Sans', sans-serif;white-space:nowrap;">CFO_RBotha</div>
<div style="left:513.8px;top:1363.9px;font-size:14.0px;line-height:17.5px;color:#111;font-weight:normal;font-family:'Liberation Sans', sans-serif;white-space:nowrap;letter-spacing:-0.5px;">JE0224391</div>
<div style="left:678.5px;top:1363.9px;font-size:14.0px;line-height:17.5px;color:#111;font-weight:normal;font-family:'Liberation Sans', sans-serif;white-space:nowrap;letter-spacing:-0.5px;">5000</div>
<div style="left:803.0999999999999px;top:1363.9px;font-size:14.0px;line-height:17.5px;color:#111;font-weight:normal;font-family:'Liberation Sans', sans-serif;white-space:nowrap;letter-spacing:-0.5px;">1711073.66</div>
<div style="left:948.0999999999999px;top:1363.9px;font-size:14.0px;line-height:17.5px;color:#111;font-weight:normal;font-family:'Liberation Sans', sans-serif;white-space:nowrap;letter-spacing:-0.5px;">0.0</div>
<div style="left:1102.8px;top:1363.9px;font-size:14.0px;line-height:17.5px;color:#111;font-weight:normal;font-family:'Liberation Sans', sans-serif;white-space:nowrap;letter-spacing:-0.5px;">2022-11-17</div>
<div style="left:1228.3px;top:1363.9px;font-size:14.0px;line-height:17.5px;color:#111;font-weight:normal;font-family:'Liberation Sans', sans-serif;white-space:nowrap;letter-spacing:-0.5px;">2022-11-17</div>
<div style="left:1392.7px;top:1363.9px;font-size:14.0px;line-height:17.5px;color:#111;font-weight:normal;font-family:'Liberation Sans', sans-serif;white-space:nowrap;letter-spacing:-0.5px;">17:16:46</div>
<div style="left:1538.0px;top:1363.46px;font-size:14.45px;line-height:18.06px;color:#111;font-weight:normal;font-family:'Liberation Sans', sans-serif;white-space:nowrap;">COGS - New Vehicle</div>
<div style="left:1832.8px;top:1363.46px;font-size:14.45px;line-height:18.06px;color:#111;font-weight:normal;font-family:'Liberation Sans', sans-serif;white-space:nowrap;">Prestige Sandton</div>
<div style="left:2067.6000000000004px;top:1363.46px;font-size:14.45px;line-height:18.06px;color:#111;font-weight:normal;font-family:'Liberation Sans', sans-serif;white-space:nowrap;">Sales_Module</div>
<div style="left:2212.7000000000003px;top:1363.46px;font-size:14.45px;line-height:18.06px;color:#111;font-weight:normal;font-family:'Liberation Sans', sans-serif;white-space:nowrap;">Acc_SNgcobo</div>
<div style="left:2377.8px;top:1363.46px;font-size:14.45px;line-height:18.06px;color:#111;font-weight:normal;font-family:'Liberation Sans', sans-serif;white-space:nowrap;">CFO_RBotha</div>
<div style="left:513.8px;top:1393.9px;font-size:14.0px;line-height:17.5px;color:#111;font-weight:normal;font-family:'Liberation Sans', sans-serif;white-space:nowrap;letter-spacing:-0.5px;">JE0301049</div>
<div style="left:678.5px;top:1393.9px;font-size:14.0px;line-height:17.5px;color:#111;font-weight:normal;font-family:'Liberation Sans', sans-serif;white-space:nowrap;letter-spacing:-0.5px;">1200</div>
<div style="left:803.0999999999999px;top:1393.9px;font-size:14.0px;line-height:17.5px;color:#111;font-weight:normal;font-family:'Liberation Sans', sans-serif;white-space:nowrap;letter-spacing:-0.5px;">0.0</div>
<div style="left:948.0999999999999px;top:1393.9px;font-size:14.0px;line-height:17.5px;color:#111;font-weight:normal;font-family:'Liberation Sans', sans-serif;white-space:nowrap;letter-spacing:-0.5px;">768828.54</div>
<div style="left:1102.8px;top:1393.9px;font-size:14.0px;line-height:17.5px;color:#111;font-weight:normal;font-family:'Liberation Sans', sans-serif;white-space:nowrap;letter-spacing:-0.5px;">2025-11-25</div>
<div style="left:1228.3px;top:1393.9px;font-size:14.0px;line-height:17.5px;color:#111;font-weight:normal;font-family:'Liberation Sans', sans-serif;white-space:nowrap;letter-spacing:-0.5px;">2025-11-25</div>
<div style="left:1392.7px;top:1393.9px;font-size:14.0px;line-height:17.5px;color:#111;font-weight:normal;font-family:'Liberation Sans', sans-serif;white-space:nowrap;letter-spacing:-0.5px;">10:20:16</div>
<div style="left:1538.0px;top:1393.46px;font-size:14.45px;line-height:18.06px;color:#111;font-weight:normal;font-family:'Liberation Sans', sans-serif;white-space:nowrap;">Inventory reduction</div>
<div style="left:1832.8px;top:1393.46px;font-size:14.45px;line-height:18.06px;color:#111;font-weight:normal;font-family:'Liberation Sans', sans-serif;white-space:nowrap;">Prestige Centurion</div>
<div style="left:2067.6000000000004px;top:1393.46px;font-size:14.45px;line-height:18.06px;color:#111;font-weight:normal;font-family:'Liberation Sans', sans-serif;white-space:nowrap;">Sales_Module</div>
<div style="left:2212.7000000000003px;top:1393.46px;font-size:14.45px;line-height:18.06px;color:#111;font-weight:normal;font-family:'Liberation Sans', sans-serif;white-space:nowrap;">Acc_BZulu</div>
<div style="left:2377.8px;top:1393.46px;font-size:14.45px;line-height:18.06px;color:#111;font-weight:normal;font-family:'Liberation Sans', sans-serif;white-space:nowrap;">FinMgr_PVenter</div>
<div style="left:513.8px;top:1423.9px;font-size:14.0px;line-height:17.5px;color:#111;font-weight:normal;font-family:'Liberation Sans', sans-serif;white-space:nowrap;letter-spacing:-0.5px;">JE0195754</div>
<div style="left:678.5px;top:1423.9px;font-size:14.0px;line-height:17.5px;color:#111;font-weight:normal;font-family:'Liberation Sans', sans-serif;white-space:nowrap;letter-spacing:-0.5px;">1100</div>
<div style="left:803.0999999999999px;top:1423.9px;font-size:14.0px;line-height:17.5px;color:#111;font-weight:normal;font-family:'Liberation Sans', sans-serif;white-space:nowrap;letter-spacing:-0.5px;">6336.81</div>
<div style="left:948.0999999999999px;top:1423.9px;font-size:14.0px;line-height:17.5px;color:#111;font-weight:normal;font-family:'Liberation Sans', sans-serif;white-space:nowrap;letter-spacing:-0.5px;">0.0</div>
<div style="left:1102.8px;top:1423.9px;font-size:14.0px;line-height:17.5px;color:#111;font-weight:normal;font-family:'Liberation Sans', sans-serif;white-space:nowrap;letter-spacing:-0.5px;">2025-09-24</div>
<div style="left:1228.3px;top:1423.9px;font-size:14.0px;line-height:17.5px;color:#111;font-weight:normal;font-family:'Liberation Sans', sans-serif;white-space:nowrap;letter-spacing:-0.5px;">2025-09-24</div>
<div style="left:1392.7px;top:1423.9px;font-size:14.0px;line-height:17.5px;color:#111;font-weight:normal;font-family:'Liberation Sans', sans-serif;white-space:nowrap;letter-spacing:-0.5px;">16:20:44</div>
<div style="left:1538.0px;top:1423.46px;font-size:14.45px;line-height:18.06px;color:#111;font-weight:normal;font-family:'Liberation Sans', sans-serif;white-space:nowrap;">Revenue - Parts</div>
<div style="left:1832.8px;top:1423.46px;font-size:14.45px;line-height:18.06px;color:#111;font-weight:normal;font-family:'Liberation Sans', sans-serif;white-space:nowrap;">Prestige Menlyn</div>
<div style="left:2067.6000000000004px;top:1423.46px;font-size:14.45px;line-height:18.06px;color:#111;font-weight:normal;font-family:'Liberation Sans', sans-serif;white-space:nowrap;">Sales_Module</div>
<div style="left:2212.7000000000003px;top:1423.46px;font-size:14.45px;line-height:18.06px;color:#111;font-weight:normal;font-family:'Liberation Sans', sans-serif;white-space:nowrap;">Acc_PBotha</div>
<div style="left:2377.8px;top:1423.46px;font-size:14.45px;line-height:18.06px;color:#111;font-weight:normal;font-family:'Liberation Sans', sans-serif;white-space:nowrap;">FinMgr_TMaseko</div>
<div style="left:2516px;top:1048px;width:2.5px;height:21px;background:#858585;"></div>
<div style="left:528.5px;top:1457px;width:1269px;height:2.5px;background:#858585;"></div>
</body></html>
